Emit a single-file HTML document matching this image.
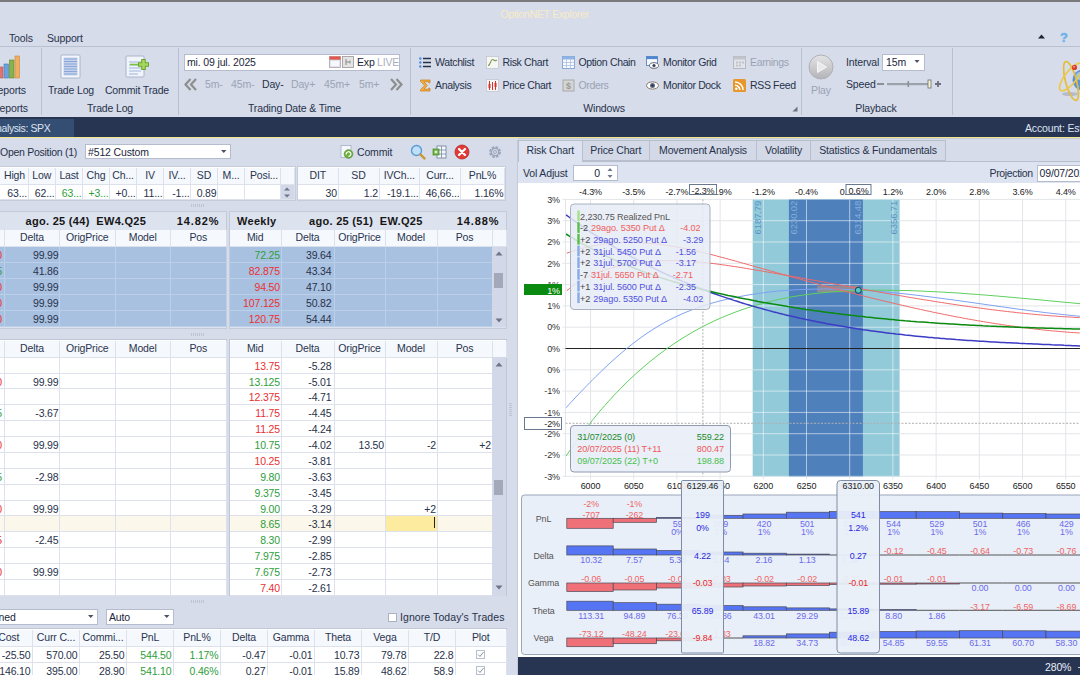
<!DOCTYPE html>
<html><head><meta charset="utf-8"><title>OptionNET Explorer</title>
<style>
html,body{margin:0;padding:0}
body{width:1080px;height:675px;overflow:hidden;position:relative;background:#d6dcea;font-family:"Liberation Sans",sans-serif;font-size:10.5px;color:#27324a;letter-spacing:-0.15px}
.a{position:absolute;white-space:nowrap}
.t{position:absolute;white-space:nowrap;line-height:12px;height:12px}
.c{text-align:center}
.r{text-align:right}
.g{color:#9aa3b4}
.vsep{position:absolute;width:1px;background:#b9c0cf}
.cell{position:absolute;box-sizing:border-box;border-right:1px solid #dce1eb;border-bottom:1px solid #dce1eb;white-space:nowrap;overflow:hidden;line-height:15px;padding:0 3px}
.hd{background:#f5f8fc;color:#2a3550;text-align:center}
.wt{background:#fff}
.grn{color:#2e9e3a}
.red{color:#ea3030}
.inp{position:absolute;background:#fff;border:1px solid #b4bccd;box-sizing:border-box}
svg{position:absolute;overflow:visible}
</style></head><body>

<div class="a" style="left:0;top:0;width:1080px;height:116px;background:#d6dcea"></div>
<div class="a" style="left:0;top:0;width:1080px;height:2px;background:#7a7a7c"></div>
<div class="t" style="left:500.5px;top:8px;color:#f8ebc6;font-size:10.5px;letter-spacing:-0.3px">OptionNET Explorer</div>
<div class="t" style="left:9px;top:32px">Tools</div>
<div class="t" style="left:47px;top:32px">Support</div>
<div class="a" style="left:0;top:46px;width:1080px;height:1px;background:#b9c0cf"></div>
<div class="vsep" style="left:41px;top:48px;height:67px"></div>
<div class="vsep" style="left:178px;top:48px;height:67px"></div>
<div class="vsep" style="left:410px;top:48px;height:67px"></div>
<div class="vsep" style="left:801px;top:48px;height:67px"></div>
<div class="vsep" style="left:952px;top:48px;height:67px"></div>
<div class="t c " style="left:-90px;width:200px;top:102px;">Reports</div>
<div class="t c " style="left:10px;width:200px;top:102px;">Trade Log</div>
<div class="t c " style="left:194.5px;width:200px;top:102px;">Trading Date &amp; Time</div>
<div class="t c " style="left:504px;width:200px;top:102px;">Windows</div>
<div class="t c " style="left:776px;width:200px;top:102px;">Playback</div>
<div class="t c " style="left:-92px;width:200px;top:84px;">Reports</div>
<div class="t c " style="left:-29px;width:200px;top:84px;">Trade Log</div>
<div class="t c " style="left:37px;width:200px;top:84px;">Commit Trade</div>
<div class="t c g" style="left:721px;width:200px;top:84px;">Play</div>
<svg style="left:0;top:54px" width="22" height="26" viewBox="0 0 22 26">
<rect x="-2" y="13" width="5" height="11" fill="#e07470" stroke="#b85450" stroke-width=".6"/>
<rect x="4" y="10" width="4.5" height="14" fill="#6aa2dc" stroke="#4a7eb4" stroke-width=".6"/>
<rect x="9.5" y="6" width="4.5" height="18" fill="#88b24a" stroke="#62882f" stroke-width=".6"/>
<rect x="15" y="2" width="4.5" height="22" fill="#f0ae62" stroke="#c48a3e" stroke-width=".6"/>
</svg>
<svg style="left:60px;top:54px" width="22" height="26" viewBox="0 0 22 26">
<rect x="1" y="1" width="19" height="23" rx="1" fill="#f4f7fc" stroke="#a9b6cc"/>
<rect x="3.500" y="3.500" width="14" height="18" fill="#c4d2ec"/><g stroke="#8aa6d8" stroke-width="1.100"><path d="M4 5h13M4 7.500h13M4 10h13M4 12.500h13M4 15h13M4 17.500h13M4 20h13"/></g>
</svg>
<svg style="left:125px;top:54px" width="28" height="26" viewBox="0 0 28 26">
<rect x="1" y="2" width="18" height="21" rx="1" fill="#f1f5fb" stroke="#a9b6cc"/>
<g stroke="#9db6dc" stroke-width="1.2"><path d="M4 8h12M4 11h12M4 14h12M4 17h12M4 20h9"/></g>
<path d="M5 10.5h9" stroke="#7fc241" stroke-width="1.6"/>
<path d="M18.5 5v11M13 10.5h11" stroke="#6aa52e" stroke-width="4.6"/>
<path d="M18.5 6v9M14 10.5h9" stroke="#a6d65a" stroke-width="2.6"/>
</svg>
<div class="inp" style="left:184px;top:54px;width:216px;height:17px"></div>
<div class="t" style="left:187px;top:56px;color:#1c263c">mi. 09 jul. 2025</div>
<svg style="left:329px;top:56px" width="12" height="12" viewBox="0 0 12 12"><rect x=".5" y=".5" width="11" height="11" fill="#dbe4f5" stroke="#b9a0a0" stroke-width=".8"/><rect x=".5" y=".5" width="11" height="3.2" fill="#e0584c"/><rect x="2" y="5" width="8" height="5" fill="#f6f8fc"/></svg>
<svg style="left:342px;top:56px" width="12" height="12" viewBox="0 0 12 12"><rect x=".5" y=".5" width="11" height="11" fill="#e4e4e4" stroke="#a0a0a0" stroke-width=".9"/><path d="M4 3v6M4 6h4M8 4.5v3" stroke="#8a8a8a" stroke-width="1" fill="none"/></svg>
<div class="t" style="left:357px;top:56px;color:#1c263c">Exp</div>
<div class="t g" style="left:377px;top:56px;color:#a9b0bd">LIVE</div>
<div class="t g" style="left:205px;top:78px">5m-</div>
<div class="t g" style="left:231px;top:78px">45m-</div>
<div class="t " style="left:262px;top:78px">Day-</div>
<div class="t g" style="left:291px;top:78px">Day+</div>
<div class="t g" style="left:324px;top:78px">45m+</div>
<div class="t g" style="left:359px;top:78px">5m+</div>
<svg style="left:184px;top:78px" width="14" height="13" viewBox="0 0 14 13"><path d="M6.5 1L1.5 6.5l5 5.5M12 1L7 6.5l5 5.5" fill="none" stroke="#8e8e8e" stroke-width="2.2"/></svg>
<svg style="left:389px;top:78px" width="14" height="13" viewBox="0 0 14 13"><path d="M2 1l5 5.5-5 5.5M7.500 1l5 5.500-5 5.500" fill="none" stroke="#8e8e8e" stroke-width="2.2"/></svg>
<svg style="left:419px;top:56.0px" width="13" height="13" viewBox="0 0 13 13"><g stroke="#27324a" stroke-width="1.4"><path d="M4 2.500h8M4 6.500h8M4 10.500h8"/></g><g fill="#4a90e0"><circle cx="1.300" cy="2.500" r="1.200"/><circle cx="1.300" cy="6.500" r="1.200"/><circle cx="1.300" cy="10.500" r="1.200"/></g></svg>
<div class="t " style="left:435px;top:56.0px;letter-spacing:-0.35px">Watchlist</div>
<svg style="left:419px;top:78.5px" width="13" height="13" viewBox="0 0 13 13"><path d="M1.500 1h9.500v2.800h-1.300V2.800H4.800L8.300 6.500 4.800 10.200h4.900V9.200H11V12H1.500v-1.200L5.600 6.500 1.500 2.200z" fill="#f4b03a" stroke="#c9791a" stroke-width=".7"/></svg>
<div class="t " style="left:435px;top:78.5px;letter-spacing:-0.35px">Analysis</div>
<svg style="left:486px;top:56.0px" width="13" height="13" viewBox="0 0 13 13"><rect x=".5" y=".5" width="12" height="12" fill="#f6f6f2" stroke="#c2c6cf" stroke-width=".8"/><path d="M2 9.500C4.500 9.500 4.500 3.500 6.500 3.500S8.500 6 11 4" fill="none" stroke="#7c9a52" stroke-width="1.100"/></svg>
<div class="t " style="left:502.5px;top:56.0px;letter-spacing:-0.35px">Risk Chart</div>
<svg style="left:486px;top:78.5px" width="13" height="13" viewBox="0 0 13 13"><rect x=".5" y=".5" width="12" height="12" fill="#f6f6f6" stroke="#c2c6cf" stroke-width=".8"/><g stroke="#d8332a" stroke-width="1"><path d="M3.500 2v9M6.500 3v8M9.500 2v9"/></g><rect x="2.500" y="5" width="2" height="4" fill="#d8332a"/><rect x="8.500" y="4" width="2" height="4" fill="#d8332a"/></svg>
<div class="t " style="left:502.5px;top:78.5px;letter-spacing:-0.35px">Price Chart</div>
<svg style="left:562px;top:56.0px" width="13" height="13" viewBox="0 0 13 13"><rect x=".5" y=".5" width="12" height="12" fill="#f8fafd" stroke="#7da3d4" stroke-width=".9"/><rect x=".5" y=".5" width="12" height="3" fill="#8db4e4"/><path d="M.5 6.500h12M.5 9.500h12M4.500 3.500v9M8.500 3.500v9" stroke="#a8c2e6" stroke-width=".8"/></svg>
<div class="t " style="left:578.5px;top:56.0px;letter-spacing:-0.35px">Option Chain</div>
<svg style="left:562px;top:78.5px" width="13" height="13" viewBox="0 0 13 13"><rect x="1" y="1" width="11" height="11" fill="#d5d5d5" stroke="#a8a8a8"/><text x="6.500" y="10" font-size="9" text-anchor="middle" fill="#9a9a9a" font-family="Liberation Sans" font-weight="bold">$</text></svg>
<div class="t g" style="left:578.5px;top:78.5px;letter-spacing:-0.35px">Orders</div>
<svg style="left:646px;top:56.0px" width="13" height="13" viewBox="0 0 13 13"><rect x=".5" y=".5" width="11" height="9" fill="#f4f8fd" stroke="#5b86c2" stroke-width=".9"/><rect x=".5" y=".5" width="11" height="2.600" fill="#4f86cf"/><ellipse cx="8" cy="9.500" rx="4.500" ry="2.800" fill="#fff" stroke="#5a5a66" stroke-width=".9"/><circle cx="8" cy="9.500" r="1.600" fill="#38445e"/></svg>
<div class="t " style="left:663px;top:56.0px;letter-spacing:-0.35px">Monitor Grid</div>
<svg style="left:646px;top:78.5px" width="13" height="13" viewBox="0 0 13 13"><ellipse cx="6.500" cy="6.500" rx="6" ry="3.600" fill="#fff" stroke="#8a7a70" stroke-width="1"/><circle cx="6.500" cy="6.500" r="2.500" fill="#5b6b86"/><circle cx="6.500" cy="6.500" r="1.100" fill="#1c2434"/></svg>
<div class="t " style="left:663px;top:78.5px;letter-spacing:-0.35px">Monitor Dock</div>
<svg style="left:733px;top:56.0px" width="13" height="13" viewBox="0 0 13 13"><rect x=".5" y=".5" width="12" height="12" fill="#e2e4e8" stroke="#b2b6bf" stroke-width=".9"/><rect x=".5" y=".5" width="12" height="3" fill="#c2c5cc"/><g fill="#bfc3cb"><rect x="3" y="5.500" width="2" height="2"/><rect x="6" y="5.500" width="2" height="2"/><rect x="9" y="5.500" width="2" height="2"/><rect x="3" y="8.500" width="2" height="2"/><rect x="6" y="8.500" width="2" height="2"/></g></svg>
<div class="t g" style="left:750px;top:56.0px;letter-spacing:-0.35px">Earnings</div>
<svg style="left:733px;top:78.5px" width="13" height="13" viewBox="0 0 13 13"><rect x="0" y="0" width="13" height="13" rx="1.500" fill="#e8972a"/><circle cx="3.300" cy="9.800" r="1.300" fill="#fff"/><path d="M2 6.200a4.800 4.800 0 0 1 4.800 4.800M2 3a8 8 0 0 1 8 8" fill="none" stroke="#fff" stroke-width="1.500"/></svg>
<div class="t " style="left:750px;top:78.5px;letter-spacing:-0.35px">RSS Feed</div>
<svg style="left:792px;top:106px" width="6" height="6" viewBox="0 0 6 6"><path d="M5.500 0.500v5h-5z" fill="#6a7388"/></svg>
<svg style="left:808px;top:54px" width="26" height="26" viewBox="0 0 26 26"><defs><linearGradient id="pg" x1="0" y1="0" x2="0" y2="1"><stop offset="0" stop-color="#e4e4e6"/><stop offset="1" stop-color="#b4b4b8"/></linearGradient></defs><circle cx="13" cy="13" r="12" fill="url(#pg)" stroke="#b0b0b6"/><path d="M9.500 7.500v11l9-5.500z" fill="#e9e9ec" stroke="#f6f6f8" stroke-width="1"/></svg>
<div class="t" style="left:846px;top:56px">Interval</div>
<div class="inp" style="left:882px;top:54px;width:43px;height:17px"></div>
<div class="t" style="left:886px;top:56px;color:#1c263c">15m</div>
<svg style="left:914px;top:60px" width="6" height="4" viewBox="0 0 6 4"><path d="M.5 0h5l-2.500 3z" fill="#4a5468"/></svg>
<div class="t" style="left:846px;top:78px">Speed</div>
<svg style="left:876px;top:78px" width="68" height="12" viewBox="0 0 68 12"><rect x="1" y="5" width="7" height="2" fill="#8a8f98"/><rect x="11" y="5" width="43" height="2.200" fill="#9da2aa"/><rect x="31.500" y="3" width="1.600" height="6" fill="#8a8f98"/><rect x="52" y="2" width="3" height="8" fill="#f8f3c8" stroke="#6a6f78" stroke-width=".8"/><path d="M62 3v6M59 6h6" stroke="#6a7080" stroke-width="1.800"/></svg>
<svg style="left:1038px;top:34px" width="8" height="5" viewBox="0 0 8 5"><path d="M0 4.500h7L3.500 0.500z" fill="#1c2434"/></svg>
<div class="a" style="left:1060px;top:29.500px;font-size:13px;font-weight:bold;color:#6aaee8;line-height:16px;text-shadow:0 0 1.500px #8cc0f0">?</div>
<svg style="left:0;top:0" width="1080" height="116" viewBox="0 0 1080 116">
<ellipse cx="1070" cy="94" rx="8" ry="2" fill="#b4bccb"/>
<circle cx="1083" cy="80" r="10.5" fill="#5b93d8"/><circle cx="1080" cy="76" r="4" fill="#9cc4ee"/>
<ellipse cx="1071" cy="81" rx="20" ry="5.500" fill="none" stroke="#e6bc3a" stroke-width="1.700" transform="rotate(75 1071 81)"/>
<ellipse cx="1071" cy="77" rx="17" ry="6" fill="none" stroke="#ecc84c" stroke-width="1.700" transform="rotate(-52 1071 77)"/>
<circle cx="1074.500" cy="67.400" r="2.600" fill="#d8402a"/><circle cx="1074" cy="66.800" r="1" fill="#f09080"/>
</svg>
<div class="a" style="left:0;top:116.500px;width:1080px;height:20px;background:#283552"></div>
<div class="a" style="left:0;top:119px;width:74px;height:17.500px;background:#344d73"></div>
<div class="t" style="left:-10.500px;top:122px;color:#dde4f2;letter-spacing:-0.4px">Analysis: SPX</div>
<div class="t" style="left:1025px;top:121.500px;color:#dde4f2">Account: Est</div>
<div class="a" style="left:0;top:136.500px;width:1080px;height:1.600px;background:#f3e68a"></div>
<div class="a" style="left:0;top:138.100px;width:1080px;height:.6px;background:#c4cbd6"></div>
<div class="a" style="left:0;top:138px;width:518px;height:537px;background:#d6dcea"></div>
<div class="a" style="left:517px;top:140px;width:1px;height:535px;background:#c3cad9"></div>
<div class="t" style="left:0px;top:145.5px;letter-spacing:-0.28px">Open Position (1)</div>
<div class="inp" style="left:85px;top:144px;width:146px;height:15px"></div>
<div class="t" style="left:88px;top:146px;color:#1c263c">#512 Custom</div>
<svg style="left:221px;top:150px" width="6" height="4" viewBox="0 0 6 4"><path d="M0 0h5.500l-2.750 3z" fill="#4a5468"/></svg>
<svg style="left:340px;top:145px" width="14" height="14" viewBox="0 0 14 14"><rect x="1" y=".5" width="10" height="12" fill="#f4f7fc" stroke="#a9b6cc" stroke-width=".9"/><circle cx="8.500" cy="9" r="4.300" fill="#6db33f" stroke="#4a8a28" stroke-width=".7"/><path d="M6.300 9.500a2.300 2.300 0 1 1 2.200 1.800" fill="none" stroke="#fff" stroke-width="1.200"/></svg>
<div class="t" style="left:357px;top:146px">Commit</div>
<svg style="left:410px;top:144px" width="16" height="16" viewBox="0 0 16 16"><circle cx="6.500" cy="6.500" r="5" fill="#bfe0f8" stroke="#5a9ad6" stroke-width="1.400"/><path d="M10.500 10.500l4 4" stroke="#c8962a" stroke-width="2.400" stroke-linecap="round"/></svg>
<svg style="left:432px;top:145px" width="15" height="14" viewBox="0 0 15 14"><rect x="5" y="1" width="9" height="12" fill="#f4f7fc" stroke="#7a8aa4" stroke-width=".9"/><path d="M9.500 1v12M5 5h9M5 9h9" stroke="#7a8aa4" stroke-width=".8"/><rect x="1" y="4" width="6" height="6" fill="#6db33f" stroke="#4a8a28" stroke-width=".7"/><path d="M2.500 7h3M4 5.500v3" stroke="#fff" stroke-width="1"/></svg>
<svg style="left:454px;top:144px" width="16" height="16" viewBox="0 0 16 16"><circle cx="8" cy="8" r="7" fill="#e23a36" stroke="#b82420" stroke-width=".8"/><path d="M5 5l6 6M11 5l-6 6" stroke="#fff" stroke-width="2.200" stroke-linecap="round"/></svg>
<svg style="left:488px;top:145px" width="14" height="14" viewBox="0 0 14 14"><circle cx="7" cy="7" r="4.600" fill="none" stroke="#9aa5ba" stroke-width="2.600" stroke-dasharray="2.400 1.200"/><circle cx="7" cy="7" r="3.600" fill="#d6dcea" stroke="#9aa5ba" stroke-width="1.200"/><circle cx="7" cy="7" r="1.500" fill="#d6dcea" stroke="#9aa5ba" stroke-width=".9"/></svg>
<div class="a" style="left:-1px;top:166px;width:296.5px;height:35px;background:#fff;border:1px solid #c5ccda;box-sizing:border-box"></div>
<div class="cell hd" style="left:-2.5px;top:167.7px;width:4.0px;height:17.0px;line-height:14.6px;"></div>
<div class="cell wt" style="left:-2.5px;top:184.7px;width:4.0px;height:15.5px;line-height:17.1px;"></div>
<div class="cell hd" style="left:1.5px;top:167.7px;width:27.0px;height:17.0px;line-height:14.6px;padding:0 1px;">High</div>
<div class="cell wt r " style="left:1.5px;top:184.7px;width:27.0px;height:15.5px;line-height:17.1px;padding:0 .5px 0 0">63...</div>
<div class="cell hd" style="left:28.5px;top:167.7px;width:27.5px;height:17.0px;line-height:14.6px;padding:0 1px;">Low</div>
<div class="cell wt r " style="left:28.5px;top:184.7px;width:27.5px;height:15.5px;line-height:17.1px;padding:0 .5px 0 0">62...</div>
<div class="cell hd" style="left:56.0px;top:167.7px;width:27.0px;height:17.0px;line-height:14.6px;padding:0 1px;">Last</div>
<div class="cell wt r grn" style="left:56.0px;top:184.7px;width:27.0px;height:15.5px;line-height:17.1px;padding:0 .5px 0 0">63...</div>
<div class="cell hd" style="left:83.0px;top:167.7px;width:27.0px;height:17.0px;line-height:14.6px;padding:0 1px;">Chg</div>
<div class="cell wt r grn" style="left:83.0px;top:184.7px;width:27.0px;height:15.5px;line-height:17.1px;padding:0 .5px 0 0">+3...</div>
<div class="cell hd" style="left:110.0px;top:167.7px;width:27.0px;height:17.0px;line-height:14.6px;padding:0 1px;">Ch...</div>
<div class="cell wt r " style="left:110.0px;top:184.7px;width:27.0px;height:15.5px;line-height:17.1px;padding:0 .5px 0 0">+0...</div>
<div class="cell hd" style="left:137.0px;top:167.7px;width:27.0px;height:17.0px;line-height:14.6px;padding:0 1px;">IV</div>
<div class="cell wt r " style="left:137.0px;top:184.7px;width:27.0px;height:15.5px;line-height:17.1px;padding:0 .5px 0 0">11...</div>
<div class="cell hd" style="left:164.0px;top:167.7px;width:27.0px;height:17.0px;line-height:14.6px;padding:0 1px;">IV...</div>
<div class="cell wt r " style="left:164.0px;top:184.7px;width:27.0px;height:15.5px;line-height:17.1px;padding:0 .5px 0 0">-1...</div>
<div class="cell hd" style="left:191.0px;top:167.7px;width:27.0px;height:17.0px;line-height:14.6px;padding:0 1px;">SD</div>
<div class="cell wt r " style="left:191.0px;top:184.7px;width:27.0px;height:15.5px;line-height:17.1px;padding:0 .5px 0 0">0.89</div>
<div class="cell hd" style="left:218.0px;top:167.7px;width:27.0px;height:17.0px;line-height:14.6px;padding:0 1px;">M...</div>
<div class="cell wt r " style="left:218.0px;top:184.7px;width:27.0px;height:15.5px;line-height:17.1px;padding:0 .5px 0 0"></div>
<div class="cell hd" style="left:245.0px;top:167.7px;width:35.5px;height:17.0px;line-height:14.6px;padding:0 1px;text-align:left;padding-left:5px;">Posi...</div>
<div class="cell wt r " style="left:245.0px;top:184.7px;width:35.5px;height:15.5px;line-height:17.1px;padding:0 .5px 0 0"></div>
<div class="cell hd" style="left:280.5px;top:167.7px;width:14.5px;height:17.0px;line-height:14.6px;padding:0 1px;"></div>
<div class="cell wt r " style="left:280.5px;top:184.7px;width:14.5px;height:15.5px;line-height:17.1px;padding:0 .5px 0 0;background:#d2d8e7"></div>
<svg style="left:283px;top:186px" width="8" height="13" viewBox="0 0 8 13"><path d="M1 4.500h6L4 1.500zM1 8.500h6L4 11.500z" fill="#6c758a"/></svg>
<div class="a" style="left:296.500px;top:166px;width:209px;height:35px;background:#fff;border:1px solid #c5ccda;box-sizing:border-box"></div>
<div class="cell hd" style="left:298.0px;top:167.7px;width:40.5px;height:17.0px;line-height:14.6px;padding:0 1px">DIT</div>
<div class="cell wt r" style="left:298.0px;top:184.7px;width:40.5px;height:15.5px;line-height:17.1px;padding:0 .5px 0 0">30</div>
<div class="cell hd" style="left:338.5px;top:167.7px;width:41.0px;height:17.0px;line-height:14.6px;padding:0 1px">SD</div>
<div class="cell wt r" style="left:338.5px;top:184.7px;width:41.0px;height:15.5px;line-height:17.1px;padding:0 .5px 0 0">1.2</div>
<div class="cell hd" style="left:379.5px;top:167.7px;width:40.5px;height:17.0px;line-height:14.6px;padding:0 1px">IVCh...</div>
<div class="cell wt r" style="left:379.5px;top:184.7px;width:40.5px;height:15.5px;line-height:17.1px;padding:0 .5px 0 0">-19.1...</div>
<div class="cell hd" style="left:420.0px;top:167.7px;width:41.0px;height:17.0px;line-height:14.6px;padding:0 1px">Curr...</div>
<div class="cell wt r" style="left:420.0px;top:184.7px;width:41.0px;height:15.5px;line-height:17.1px;padding:0 .5px 0 0">46,66...</div>
<div class="cell hd" style="left:461.0px;top:167.7px;width:44.0px;height:17.0px;line-height:14.6px;padding:0 1px">PnL%</div>
<div class="cell wt r" style="left:461.0px;top:184.7px;width:44.0px;height:15.5px;line-height:17.1px;padding:0 .5px 0 0">1.16%</div>
<div class="a" style="left:191px;top:203.5px;width:14px;height:3px;background:repeating-linear-gradient(90deg,#bcc3d2 0 1px,transparent 1px 2px)"></div>
<div class="a" style="left:191px;top:332.5px;width:14px;height:3px;background:repeating-linear-gradient(90deg,#bcc3d2 0 1px,transparent 1px 2px)"></div>
<div class="a" style="left:191px;top:599.5px;width:14px;height:3px;background:repeating-linear-gradient(90deg,#bcc3d2 0 1px,transparent 1px 2px)"></div>
<div class="a" style="left:509.0px;top:403px;width:3px;height:14px;background:repeating-linear-gradient(#bcc3d2 0 1px,transparent 1px 2px)"></div>
<div class="a" style="left:-2px;top:210.500px;width:228.500px;height:118px;background:#dce2ee;border:1px solid #c3cad8;box-sizing:border-box"></div>
<div class="a" style="left:229px;top:210.500px;width:277.500px;height:118px;background:#dce2ee;border:1px solid #c3cad8;box-sizing:border-box"></div>
<div class="t" style="left:25.5px;top:214.500px;font-weight:bold;font-size:11px;color:#161616;letter-spacing:0.3px">ago. 25 (44)&nbsp; EW4.Q25</div>
<div class="t r" style="left:150px;width:69.5px;top:214.500px;font-weight:bold;font-size:11px;color:#161616;letter-spacing:0.3px;letter-spacing:0.9px">14.82%</div>
<div class="t" style="left:237px;top:214.500px;font-weight:bold;font-size:11px;color:#161616;letter-spacing:0.3px">Weekly</div>
<div class="t" style="left:309px;top:214.500px;font-weight:bold;font-size:11px;color:#161616;letter-spacing:0.3px">ago. 25 (51)&nbsp; EW.Q25</div>
<div class="t r" style="left:430px;width:69.5px;top:214.500px;font-weight:bold;font-size:11px;color:#161616;letter-spacing:0.3px;letter-spacing:0.9px">14.88%</div>
<div class="cell hd" style="left:-50.5px;top:230.2px;width:55.5px;height:17.0px;line-height:14.6px;padding:0"></div>
<div class="cell hd" style="left:5.0px;top:230.2px;width:55.0px;height:17.0px;line-height:14.6px;padding:0">Delta</div>
<div class="cell hd" style="left:60.0px;top:230.2px;width:55.5px;height:17.0px;line-height:14.6px;padding:0">OrigPrice</div>
<div class="cell hd" style="left:115.5px;top:230.2px;width:55.5px;height:17.0px;line-height:14.6px;padding:0">Model</div>
<div class="cell hd" style="left:171.0px;top:230.2px;width:55.5px;height:17.0px;line-height:14.6px;padding:0">Pos</div>
<div class="cell hd" style="left:230.0px;top:230.2px;width:51.5px;height:17.0px;line-height:14.6px;padding:0">Mid</div>
<div class="cell hd" style="left:281.5px;top:230.2px;width:53.0px;height:17.0px;line-height:14.6px;padding:0">Delta</div>
<div class="cell hd" style="left:334.5px;top:230.2px;width:51.0px;height:17.0px;line-height:14.6px;padding:0">OrigPrice</div>
<div class="cell hd" style="left:385.5px;top:230.2px;width:52.0px;height:17.0px;line-height:14.6px;padding:0">Model</div>
<div class="cell hd" style="left:437.5px;top:230.2px;width:55.0px;height:17.0px;line-height:14.6px;padding:0">Pos</div>
<div class="cell hd" style="left:492.5px;top:230.2px;width:14.0px;height:17.0px;line-height:14.6px;padding:0"></div>
<div class="cell r red" style="left:-50.5px;top:247.2px;width:55.5px;height:16.0px;line-height:17.6px;background:#a9c1e1;border-color:#bccfe8;padding:0 2px 0 0">0</div>
<div class="cell r" style="left:5.0px;top:247.2px;width:55.0px;height:16.0px;line-height:17.6px;background:#a9c1e1;border-color:#bccfe8;padding:0 .5px 0 0">99.99</div>
<div class="cell " style="left:60.0px;top:247.2px;width:55.5px;height:16.0px;line-height:17.6px;background:#a9c1e1;border-color:#bccfe8;"></div>
<div class="cell " style="left:115.5px;top:247.2px;width:55.5px;height:16.0px;line-height:17.6px;background:#a9c1e1;border-color:#bccfe8;"></div>
<div class="cell " style="left:171.0px;top:247.2px;width:55.5px;height:16.0px;line-height:17.6px;background:#a9c1e1;border-color:#bccfe8;"></div>
<div class="cell r grn" style="left:230.0px;top:247.2px;width:51.5px;height:16.0px;line-height:17.6px;background:#a9c1e1;border-color:#bccfe8;padding:0 .5px 0 0">72.25</div>
<div class="cell r" style="left:281.5px;top:247.2px;width:53.0px;height:16.0px;line-height:17.6px;background:#a9c1e1;border-color:#bccfe8;padding:0 2px 0 0">39.64</div>
<div class="cell " style="left:334.5px;top:247.2px;width:51.0px;height:16.0px;line-height:17.6px;background:#a9c1e1;border-color:#bccfe8;"></div>
<div class="cell " style="left:385.5px;top:247.2px;width:52.0px;height:16.0px;line-height:17.6px;background:#a9c1e1;border-color:#bccfe8;"></div>
<div class="cell " style="left:437.5px;top:247.2px;width:55.0px;height:16.0px;line-height:17.6px;background:#a9c1e1;border-color:#bccfe8;"></div>
<div class="cell r grn" style="left:-50.5px;top:263.2px;width:55.5px;height:16.0px;line-height:17.6px;background:#a9c1e1;border-color:#bccfe8;padding:0 2px 0 0">5</div>
<div class="cell r" style="left:5.0px;top:263.2px;width:55.0px;height:16.0px;line-height:17.6px;background:#a9c1e1;border-color:#bccfe8;padding:0 .5px 0 0">41.86</div>
<div class="cell " style="left:60.0px;top:263.2px;width:55.5px;height:16.0px;line-height:17.6px;background:#a9c1e1;border-color:#bccfe8;"></div>
<div class="cell " style="left:115.5px;top:263.2px;width:55.5px;height:16.0px;line-height:17.6px;background:#a9c1e1;border-color:#bccfe8;"></div>
<div class="cell " style="left:171.0px;top:263.2px;width:55.5px;height:16.0px;line-height:17.6px;background:#a9c1e1;border-color:#bccfe8;"></div>
<div class="cell r red" style="left:230.0px;top:263.2px;width:51.5px;height:16.0px;line-height:17.6px;background:#a9c1e1;border-color:#bccfe8;padding:0 .5px 0 0">82.875</div>
<div class="cell r" style="left:281.5px;top:263.2px;width:53.0px;height:16.0px;line-height:17.6px;background:#a9c1e1;border-color:#bccfe8;padding:0 2px 0 0">43.34</div>
<div class="cell " style="left:334.5px;top:263.2px;width:51.0px;height:16.0px;line-height:17.6px;background:#a9c1e1;border-color:#bccfe8;"></div>
<div class="cell " style="left:385.5px;top:263.2px;width:52.0px;height:16.0px;line-height:17.6px;background:#a9c1e1;border-color:#bccfe8;"></div>
<div class="cell " style="left:437.5px;top:263.2px;width:55.0px;height:16.0px;line-height:17.6px;background:#a9c1e1;border-color:#bccfe8;"></div>
<div class="cell r red" style="left:-50.5px;top:279.2px;width:55.5px;height:16.0px;line-height:17.6px;background:#a9c1e1;border-color:#bccfe8;padding:0 2px 0 0">0</div>
<div class="cell r" style="left:5.0px;top:279.2px;width:55.0px;height:16.0px;line-height:17.6px;background:#a9c1e1;border-color:#bccfe8;padding:0 .5px 0 0">99.99</div>
<div class="cell " style="left:60.0px;top:279.2px;width:55.5px;height:16.0px;line-height:17.6px;background:#a9c1e1;border-color:#bccfe8;"></div>
<div class="cell " style="left:115.5px;top:279.2px;width:55.5px;height:16.0px;line-height:17.6px;background:#a9c1e1;border-color:#bccfe8;"></div>
<div class="cell " style="left:171.0px;top:279.2px;width:55.5px;height:16.0px;line-height:17.6px;background:#a9c1e1;border-color:#bccfe8;"></div>
<div class="cell r red" style="left:230.0px;top:279.2px;width:51.5px;height:16.0px;line-height:17.6px;background:#a9c1e1;border-color:#bccfe8;padding:0 .5px 0 0">94.50</div>
<div class="cell r" style="left:281.5px;top:279.2px;width:53.0px;height:16.0px;line-height:17.6px;background:#a9c1e1;border-color:#bccfe8;padding:0 2px 0 0">47.10</div>
<div class="cell " style="left:334.5px;top:279.2px;width:51.0px;height:16.0px;line-height:17.6px;background:#a9c1e1;border-color:#bccfe8;"></div>
<div class="cell " style="left:385.5px;top:279.2px;width:52.0px;height:16.0px;line-height:17.6px;background:#a9c1e1;border-color:#bccfe8;"></div>
<div class="cell " style="left:437.5px;top:279.2px;width:55.0px;height:16.0px;line-height:17.6px;background:#a9c1e1;border-color:#bccfe8;"></div>
<div class="cell r red" style="left:-50.5px;top:295.2px;width:55.5px;height:16.0px;line-height:17.6px;background:#a9c1e1;border-color:#bccfe8;padding:0 2px 0 0">0</div>
<div class="cell r" style="left:5.0px;top:295.2px;width:55.0px;height:16.0px;line-height:17.6px;background:#a9c1e1;border-color:#bccfe8;padding:0 .5px 0 0">99.99</div>
<div class="cell " style="left:60.0px;top:295.2px;width:55.5px;height:16.0px;line-height:17.6px;background:#a9c1e1;border-color:#bccfe8;"></div>
<div class="cell " style="left:115.5px;top:295.2px;width:55.5px;height:16.0px;line-height:17.6px;background:#a9c1e1;border-color:#bccfe8;"></div>
<div class="cell " style="left:171.0px;top:295.2px;width:55.5px;height:16.0px;line-height:17.6px;background:#a9c1e1;border-color:#bccfe8;"></div>
<div class="cell r red" style="left:230.0px;top:295.2px;width:51.5px;height:16.0px;line-height:17.6px;background:#a9c1e1;border-color:#bccfe8;padding:0 .5px 0 0">107.125</div>
<div class="cell r" style="left:281.5px;top:295.2px;width:53.0px;height:16.0px;line-height:17.6px;background:#a9c1e1;border-color:#bccfe8;padding:0 2px 0 0">50.82</div>
<div class="cell " style="left:334.5px;top:295.2px;width:51.0px;height:16.0px;line-height:17.6px;background:#a9c1e1;border-color:#bccfe8;"></div>
<div class="cell " style="left:385.5px;top:295.2px;width:52.0px;height:16.0px;line-height:17.6px;background:#a9c1e1;border-color:#bccfe8;"></div>
<div class="cell " style="left:437.5px;top:295.2px;width:55.0px;height:16.0px;line-height:17.6px;background:#a9c1e1;border-color:#bccfe8;"></div>
<div class="cell r red" style="left:-50.5px;top:311.2px;width:55.5px;height:16.0px;line-height:17.6px;background:#a9c1e1;border-color:#bccfe8;padding:0 2px 0 0">0</div>
<div class="cell r" style="left:5.0px;top:311.2px;width:55.0px;height:16.0px;line-height:17.6px;background:#a9c1e1;border-color:#bccfe8;padding:0 .5px 0 0">99.99</div>
<div class="cell " style="left:60.0px;top:311.2px;width:55.5px;height:16.0px;line-height:17.6px;background:#a9c1e1;border-color:#bccfe8;"></div>
<div class="cell " style="left:115.5px;top:311.2px;width:55.5px;height:16.0px;line-height:17.6px;background:#a9c1e1;border-color:#bccfe8;"></div>
<div class="cell " style="left:171.0px;top:311.2px;width:55.5px;height:16.0px;line-height:17.6px;background:#a9c1e1;border-color:#bccfe8;"></div>
<div class="cell r red" style="left:230.0px;top:311.2px;width:51.5px;height:16.0px;line-height:17.6px;background:#a9c1e1;border-color:#bccfe8;padding:0 .5px 0 0">120.75</div>
<div class="cell r" style="left:281.5px;top:311.2px;width:53.0px;height:16.0px;line-height:17.6px;background:#a9c1e1;border-color:#bccfe8;padding:0 2px 0 0">54.44</div>
<div class="cell " style="left:334.5px;top:311.2px;width:51.0px;height:16.0px;line-height:17.6px;background:#a9c1e1;border-color:#bccfe8;"></div>
<div class="cell " style="left:385.5px;top:311.2px;width:52.0px;height:16.0px;line-height:17.6px;background:#a9c1e1;border-color:#bccfe8;"></div>
<div class="cell " style="left:437.5px;top:311.2px;width:55.0px;height:16.0px;line-height:17.6px;background:#a9c1e1;border-color:#bccfe8;"></div>
<div class="a" style="left:492px;top:246.500px;width:14px;height:80px;background:#d2d8e7"></div>
<svg style="left:495px;top:251px" width="8" height="5" viewBox="0 0 8 5"><path d="M.5 4.500h7L4 .5z" fill="#6c758a"/></svg>
<svg style="left:495px;top:318px" width="8" height="5" viewBox="0 0 8 5"><path d="M.5 .5h7L4 4.500z" fill="#6c758a"/></svg>
<div class="a" style="left:494px;top:273px;width:9px;height:15px;background:#a3a9b8"></div>
<div class="a" style="left:-2px;top:338.500px;width:228.500px;height:257.500px;background:#fff;border:1px solid #c0c8d8;box-sizing:border-box"></div>
<div class="a" style="left:229px;top:338.500px;width:277.500px;height:257.500px;background:#fff;border:1px solid #c0c8d8;box-sizing:border-box"></div>
<div class="cell hd" style="left:-50.5px;top:341.0px;width:55.5px;height:16.7px;line-height:14.3px;padding:0"></div>
<div class="cell hd" style="left:5.0px;top:341.0px;width:55.0px;height:16.7px;line-height:14.3px;padding:0">Delta</div>
<div class="cell hd" style="left:60.0px;top:341.0px;width:55.5px;height:16.7px;line-height:14.3px;padding:0">OrigPrice</div>
<div class="cell hd" style="left:115.5px;top:341.0px;width:55.5px;height:16.7px;line-height:14.3px;padding:0">Model</div>
<div class="cell hd" style="left:171.0px;top:341.0px;width:55.5px;height:16.7px;line-height:14.3px;padding:0">Pos</div>
<div class="cell hd" style="left:230.0px;top:341.0px;width:51.5px;height:16.7px;line-height:14.3px;padding:0">Mid</div>
<div class="cell hd" style="left:281.5px;top:341.0px;width:53.0px;height:16.7px;line-height:14.3px;padding:0">Delta</div>
<div class="cell hd" style="left:334.5px;top:341.0px;width:51.0px;height:16.7px;line-height:14.3px;padding:0">OrigPrice</div>
<div class="cell hd" style="left:385.5px;top:341.0px;width:52.0px;height:16.7px;line-height:14.3px;padding:0">Model</div>
<div class="cell hd" style="left:437.5px;top:341.0px;width:55.0px;height:16.7px;line-height:14.3px;padding:0">Pos</div>
<div class="cell hd" style="left:492.5px;top:341.0px;width:14.0px;height:16.7px;line-height:14.3px;padding:0"></div>
<div class="cell r " style="left:-50.5px;top:358.0px;width:55.5px;height:16.0px;line-height:17.6px;background:#fff;padding:0 2px 0 0"></div>
<div class="cell r" style="left:5.0px;top:358.0px;width:55.0px;height:16.0px;line-height:17.6px;background:#fff;padding:0 .5px 0 0"></div>
<div class="cell " style="left:60.0px;top:358.0px;width:55.5px;height:16.0px;line-height:17.6px;background:#fff;"></div>
<div class="cell " style="left:115.5px;top:358.0px;width:55.5px;height:16.0px;line-height:17.6px;background:#fff;"></div>
<div class="cell " style="left:171.0px;top:358.0px;width:55.5px;height:16.0px;line-height:17.6px;background:#fff;"></div>
<div class="cell r red" style="left:230.0px;top:358.0px;width:51.5px;height:16.0px;line-height:17.6px;background:#fff;padding:0 .5px 0 0">13.75</div>
<div class="cell r" style="left:281.5px;top:358.0px;width:53.0px;height:16.0px;line-height:17.6px;background:#fff;padding:0 2px 0 0">-5.28</div>
<div class="cell r" style="left:334.5px;top:358.0px;width:51.0px;height:16.0px;line-height:17.6px;background:#fff;padding:0 .5px 0 0"></div>
<div class="cell r" style="left:385.5px;top:358.0px;width:52.0px;height:16.0px;line-height:17.6px;background:#fff;padding:0 .5px 0 0"></div>
<div class="cell r" style="left:437.5px;top:358.0px;width:55.0px;height:16.0px;line-height:17.6px;background:#fff;padding:0 .5px 0 0"></div>
<div class="cell r red" style="left:-50.5px;top:374.0px;width:55.5px;height:15.0px;line-height:16.6px;background:#fff;padding:0 2px 0 0">0</div>
<div class="cell r" style="left:5.0px;top:374.0px;width:55.0px;height:15.0px;line-height:16.6px;background:#fff;padding:0 .5px 0 0">99.99</div>
<div class="cell " style="left:60.0px;top:374.0px;width:55.5px;height:15.0px;line-height:16.6px;background:#fff;"></div>
<div class="cell " style="left:115.5px;top:374.0px;width:55.5px;height:15.0px;line-height:16.6px;background:#fff;"></div>
<div class="cell " style="left:171.0px;top:374.0px;width:55.5px;height:15.0px;line-height:16.6px;background:#fff;"></div>
<div class="cell r grn" style="left:230.0px;top:374.0px;width:51.5px;height:15.0px;line-height:16.6px;background:#fff;padding:0 .5px 0 0">13.125</div>
<div class="cell r" style="left:281.5px;top:374.0px;width:53.0px;height:15.0px;line-height:16.6px;background:#fff;padding:0 2px 0 0">-5.01</div>
<div class="cell r" style="left:334.5px;top:374.0px;width:51.0px;height:15.0px;line-height:16.6px;background:#fff;padding:0 .5px 0 0"></div>
<div class="cell r" style="left:385.5px;top:374.0px;width:52.0px;height:15.0px;line-height:16.6px;background:#fff;padding:0 .5px 0 0"></div>
<div class="cell r" style="left:437.5px;top:374.0px;width:55.0px;height:15.0px;line-height:16.6px;background:#fff;padding:0 .5px 0 0"></div>
<div class="cell r " style="left:-50.5px;top:389.0px;width:55.5px;height:16.0px;line-height:17.6px;background:#fff;padding:0 2px 0 0"></div>
<div class="cell r" style="left:5.0px;top:389.0px;width:55.0px;height:16.0px;line-height:17.6px;background:#fff;padding:0 .5px 0 0"></div>
<div class="cell " style="left:60.0px;top:389.0px;width:55.5px;height:16.0px;line-height:17.6px;background:#fff;"></div>
<div class="cell " style="left:115.5px;top:389.0px;width:55.5px;height:16.0px;line-height:17.6px;background:#fff;"></div>
<div class="cell " style="left:171.0px;top:389.0px;width:55.5px;height:16.0px;line-height:17.6px;background:#fff;"></div>
<div class="cell r red" style="left:230.0px;top:389.0px;width:51.5px;height:16.0px;line-height:17.6px;background:#fff;padding:0 .5px 0 0">12.375</div>
<div class="cell r" style="left:281.5px;top:389.0px;width:53.0px;height:16.0px;line-height:17.6px;background:#fff;padding:0 2px 0 0">-4.71</div>
<div class="cell r" style="left:334.5px;top:389.0px;width:51.0px;height:16.0px;line-height:17.6px;background:#fff;padding:0 .5px 0 0"></div>
<div class="cell r" style="left:385.5px;top:389.0px;width:52.0px;height:16.0px;line-height:17.6px;background:#fff;padding:0 .5px 0 0"></div>
<div class="cell r" style="left:437.5px;top:389.0px;width:55.0px;height:16.0px;line-height:17.6px;background:#fff;padding:0 .5px 0 0"></div>
<div class="cell r grn" style="left:-50.5px;top:405.0px;width:55.5px;height:16.0px;line-height:17.6px;background:#fff;padding:0 2px 0 0">5</div>
<div class="cell r" style="left:5.0px;top:405.0px;width:55.0px;height:16.0px;line-height:17.6px;background:#fff;padding:0 .5px 0 0">-3.67</div>
<div class="cell " style="left:60.0px;top:405.0px;width:55.5px;height:16.0px;line-height:17.6px;background:#fff;"></div>
<div class="cell " style="left:115.5px;top:405.0px;width:55.5px;height:16.0px;line-height:17.6px;background:#fff;"></div>
<div class="cell " style="left:171.0px;top:405.0px;width:55.5px;height:16.0px;line-height:17.6px;background:#fff;"></div>
<div class="cell r red" style="left:230.0px;top:405.0px;width:51.5px;height:16.0px;line-height:17.6px;background:#fff;padding:0 .5px 0 0">11.75</div>
<div class="cell r" style="left:281.5px;top:405.0px;width:53.0px;height:16.0px;line-height:17.6px;background:#fff;padding:0 2px 0 0">-4.45</div>
<div class="cell r" style="left:334.5px;top:405.0px;width:51.0px;height:16.0px;line-height:17.6px;background:#fff;padding:0 .5px 0 0"></div>
<div class="cell r" style="left:385.5px;top:405.0px;width:52.0px;height:16.0px;line-height:17.6px;background:#fff;padding:0 .5px 0 0"></div>
<div class="cell r" style="left:437.5px;top:405.0px;width:55.0px;height:16.0px;line-height:17.6px;background:#fff;padding:0 .5px 0 0"></div>
<div class="cell r " style="left:-50.5px;top:421.0px;width:55.5px;height:16.0px;line-height:17.6px;background:#fff;padding:0 2px 0 0"></div>
<div class="cell r" style="left:5.0px;top:421.0px;width:55.0px;height:16.0px;line-height:17.6px;background:#fff;padding:0 .5px 0 0"></div>
<div class="cell " style="left:60.0px;top:421.0px;width:55.5px;height:16.0px;line-height:17.6px;background:#fff;"></div>
<div class="cell " style="left:115.5px;top:421.0px;width:55.5px;height:16.0px;line-height:17.6px;background:#fff;"></div>
<div class="cell " style="left:171.0px;top:421.0px;width:55.5px;height:16.0px;line-height:17.6px;background:#fff;"></div>
<div class="cell r red" style="left:230.0px;top:421.0px;width:51.5px;height:16.0px;line-height:17.6px;background:#fff;padding:0 .5px 0 0">11.25</div>
<div class="cell r" style="left:281.5px;top:421.0px;width:53.0px;height:16.0px;line-height:17.6px;background:#fff;padding:0 2px 0 0">-4.24</div>
<div class="cell r" style="left:334.5px;top:421.0px;width:51.0px;height:16.0px;line-height:17.6px;background:#fff;padding:0 .5px 0 0"></div>
<div class="cell r" style="left:385.5px;top:421.0px;width:52.0px;height:16.0px;line-height:17.6px;background:#fff;padding:0 .5px 0 0"></div>
<div class="cell r" style="left:437.5px;top:421.0px;width:55.0px;height:16.0px;line-height:17.6px;background:#fff;padding:0 .5px 0 0"></div>
<div class="cell r red" style="left:-50.5px;top:437.0px;width:55.5px;height:16.0px;line-height:17.6px;background:#fff;padding:0 2px 0 0">0</div>
<div class="cell r" style="left:5.0px;top:437.0px;width:55.0px;height:16.0px;line-height:17.6px;background:#fff;padding:0 .5px 0 0">99.99</div>
<div class="cell " style="left:60.0px;top:437.0px;width:55.5px;height:16.0px;line-height:17.6px;background:#fff;"></div>
<div class="cell " style="left:115.5px;top:437.0px;width:55.5px;height:16.0px;line-height:17.6px;background:#fff;"></div>
<div class="cell " style="left:171.0px;top:437.0px;width:55.5px;height:16.0px;line-height:17.6px;background:#fff;"></div>
<div class="cell r grn" style="left:230.0px;top:437.0px;width:51.5px;height:16.0px;line-height:17.6px;background:#fff;padding:0 .5px 0 0">10.75</div>
<div class="cell r" style="left:281.5px;top:437.0px;width:53.0px;height:16.0px;line-height:17.6px;background:#fff;padding:0 2px 0 0">-4.02</div>
<div class="cell r" style="left:334.5px;top:437.0px;width:51.0px;height:16.0px;line-height:17.6px;background:#fff;padding:0 .5px 0 0">13.50</div>
<div class="cell r" style="left:385.5px;top:437.0px;width:52.0px;height:16.0px;line-height:17.6px;background:#fff;padding:0 .5px 0 0">-2</div>
<div class="cell r" style="left:437.5px;top:437.0px;width:55.0px;height:16.0px;line-height:17.6px;background:#fff;padding:0 .5px 0 0">+2</div>
<div class="cell r " style="left:-50.5px;top:453.0px;width:55.5px;height:16.0px;line-height:17.6px;background:#fff;padding:0 2px 0 0"></div>
<div class="cell r" style="left:5.0px;top:453.0px;width:55.0px;height:16.0px;line-height:17.6px;background:#fff;padding:0 .5px 0 0"></div>
<div class="cell " style="left:60.0px;top:453.0px;width:55.5px;height:16.0px;line-height:17.6px;background:#fff;"></div>
<div class="cell " style="left:115.5px;top:453.0px;width:55.5px;height:16.0px;line-height:17.6px;background:#fff;"></div>
<div class="cell " style="left:171.0px;top:453.0px;width:55.5px;height:16.0px;line-height:17.6px;background:#fff;"></div>
<div class="cell r red" style="left:230.0px;top:453.0px;width:51.5px;height:16.0px;line-height:17.6px;background:#fff;padding:0 .5px 0 0">10.25</div>
<div class="cell r" style="left:281.5px;top:453.0px;width:53.0px;height:16.0px;line-height:17.6px;background:#fff;padding:0 2px 0 0">-3.81</div>
<div class="cell r" style="left:334.5px;top:453.0px;width:51.0px;height:16.0px;line-height:17.6px;background:#fff;padding:0 .5px 0 0"></div>
<div class="cell r" style="left:385.5px;top:453.0px;width:52.0px;height:16.0px;line-height:17.6px;background:#fff;padding:0 .5px 0 0"></div>
<div class="cell r" style="left:437.5px;top:453.0px;width:55.0px;height:16.0px;line-height:17.6px;background:#fff;padding:0 .5px 0 0"></div>
<div class="cell r grn" style="left:-50.5px;top:469.0px;width:55.5px;height:16.0px;line-height:17.6px;background:#fff;padding:0 2px 0 0">5</div>
<div class="cell r" style="left:5.0px;top:469.0px;width:55.0px;height:16.0px;line-height:17.6px;background:#fff;padding:0 .5px 0 0">-2.98</div>
<div class="cell " style="left:60.0px;top:469.0px;width:55.5px;height:16.0px;line-height:17.6px;background:#fff;"></div>
<div class="cell " style="left:115.5px;top:469.0px;width:55.5px;height:16.0px;line-height:17.6px;background:#fff;"></div>
<div class="cell " style="left:171.0px;top:469.0px;width:55.5px;height:16.0px;line-height:17.6px;background:#fff;"></div>
<div class="cell r grn" style="left:230.0px;top:469.0px;width:51.5px;height:16.0px;line-height:17.6px;background:#fff;padding:0 .5px 0 0">9.80</div>
<div class="cell r" style="left:281.5px;top:469.0px;width:53.0px;height:16.0px;line-height:17.6px;background:#fff;padding:0 2px 0 0">-3.63</div>
<div class="cell r" style="left:334.5px;top:469.0px;width:51.0px;height:16.0px;line-height:17.6px;background:#fff;padding:0 .5px 0 0"></div>
<div class="cell r" style="left:385.5px;top:469.0px;width:52.0px;height:16.0px;line-height:17.6px;background:#fff;padding:0 .5px 0 0"></div>
<div class="cell r" style="left:437.5px;top:469.0px;width:55.0px;height:16.0px;line-height:17.6px;background:#fff;padding:0 .5px 0 0"></div>
<div class="cell r " style="left:-50.5px;top:485.0px;width:55.5px;height:16.0px;line-height:17.6px;background:#fff;padding:0 2px 0 0"></div>
<div class="cell r" style="left:5.0px;top:485.0px;width:55.0px;height:16.0px;line-height:17.6px;background:#fff;padding:0 .5px 0 0"></div>
<div class="cell " style="left:60.0px;top:485.0px;width:55.5px;height:16.0px;line-height:17.6px;background:#fff;"></div>
<div class="cell " style="left:115.5px;top:485.0px;width:55.5px;height:16.0px;line-height:17.6px;background:#fff;"></div>
<div class="cell " style="left:171.0px;top:485.0px;width:55.5px;height:16.0px;line-height:17.6px;background:#fff;"></div>
<div class="cell r grn" style="left:230.0px;top:485.0px;width:51.5px;height:16.0px;line-height:17.6px;background:#fff;padding:0 .5px 0 0">9.375</div>
<div class="cell r" style="left:281.5px;top:485.0px;width:53.0px;height:16.0px;line-height:17.6px;background:#fff;padding:0 2px 0 0">-3.45</div>
<div class="cell r" style="left:334.5px;top:485.0px;width:51.0px;height:16.0px;line-height:17.6px;background:#fff;padding:0 .5px 0 0"></div>
<div class="cell r" style="left:385.5px;top:485.0px;width:52.0px;height:16.0px;line-height:17.6px;background:#fff;padding:0 .5px 0 0"></div>
<div class="cell r" style="left:437.5px;top:485.0px;width:55.0px;height:16.0px;line-height:17.6px;background:#fff;padding:0 .5px 0 0"></div>
<div class="cell r red" style="left:-50.5px;top:501.0px;width:55.5px;height:15.0px;line-height:16.6px;background:#fff;padding:0 2px 0 0">0</div>
<div class="cell r" style="left:5.0px;top:501.0px;width:55.0px;height:15.0px;line-height:16.6px;background:#fff;padding:0 .5px 0 0">99.99</div>
<div class="cell " style="left:60.0px;top:501.0px;width:55.5px;height:15.0px;line-height:16.6px;background:#fff;"></div>
<div class="cell " style="left:115.5px;top:501.0px;width:55.5px;height:15.0px;line-height:16.6px;background:#fff;"></div>
<div class="cell " style="left:171.0px;top:501.0px;width:55.5px;height:15.0px;line-height:16.6px;background:#fff;"></div>
<div class="cell r grn" style="left:230.0px;top:501.0px;width:51.5px;height:15.0px;line-height:16.6px;background:#fff;padding:0 .5px 0 0">9.00</div>
<div class="cell r" style="left:281.5px;top:501.0px;width:53.0px;height:15.0px;line-height:16.6px;background:#fff;padding:0 2px 0 0">-3.29</div>
<div class="cell r" style="left:334.5px;top:501.0px;width:51.0px;height:15.0px;line-height:16.6px;background:#fff;padding:0 .5px 0 0"></div>
<div class="cell r" style="left:385.5px;top:501.0px;width:52.0px;height:15.0px;line-height:16.6px;background:#fff;padding:0 .5px 0 0">+2</div>
<div class="cell r" style="left:437.5px;top:501.0px;width:55.0px;height:15.0px;line-height:16.6px;background:#fff;padding:0 .5px 0 0"></div>
<div class="cell r " style="left:-50.5px;top:516.0px;width:55.5px;height:16.0px;line-height:17.6px;background:#fbf7ea;padding:0 2px 0 0"></div>
<div class="cell r" style="left:5.0px;top:516.0px;width:55.0px;height:16.0px;line-height:17.6px;background:#fbf7ea;padding:0 .5px 0 0"></div>
<div class="cell " style="left:60.0px;top:516.0px;width:55.5px;height:16.0px;line-height:17.6px;background:#fbf7ea;"></div>
<div class="cell " style="left:115.5px;top:516.0px;width:55.5px;height:16.0px;line-height:17.6px;background:#fbf7ea;"></div>
<div class="cell " style="left:171.0px;top:516.0px;width:55.5px;height:16.0px;line-height:17.6px;background:#fbf7ea;"></div>
<div class="cell r grn" style="left:230.0px;top:516.0px;width:51.5px;height:16.0px;line-height:17.6px;background:#fbf7ea;padding:0 .5px 0 0">8.65</div>
<div class="cell r" style="left:281.5px;top:516.0px;width:53.0px;height:16.0px;line-height:17.6px;background:#fbf7ea;padding:0 2px 0 0">-3.14</div>
<div class="cell r" style="left:334.5px;top:516.0px;width:51.0px;height:16.0px;line-height:17.6px;background:#fbf7ea;padding:0 .5px 0 0"></div>
<div class="cell r" style="left:385.5px;top:516.0px;width:52.0px;height:16.0px;line-height:17.6px;background:#fdeba0;padding:0"></div>
<div class="a" style="left:434px;top:516.8px;width:1px;height:11px;background:#222"></div>
<div class="cell r" style="left:437.5px;top:516.0px;width:55.0px;height:16.0px;line-height:17.6px;background:#fbf7ea;padding:0 .5px 0 0"></div>
<div class="cell r red" style="left:-50.5px;top:532.0px;width:55.5px;height:16.0px;line-height:17.6px;background:#fff;padding:0 2px 0 0">5</div>
<div class="cell r" style="left:5.0px;top:532.0px;width:55.0px;height:16.0px;line-height:17.6px;background:#fff;padding:0 .5px 0 0">-2.45</div>
<div class="cell " style="left:60.0px;top:532.0px;width:55.5px;height:16.0px;line-height:17.6px;background:#fff;"></div>
<div class="cell " style="left:115.5px;top:532.0px;width:55.5px;height:16.0px;line-height:17.6px;background:#fff;"></div>
<div class="cell " style="left:171.0px;top:532.0px;width:55.5px;height:16.0px;line-height:17.6px;background:#fff;"></div>
<div class="cell r grn" style="left:230.0px;top:532.0px;width:51.5px;height:16.0px;line-height:17.6px;background:#fff;padding:0 .5px 0 0">8.30</div>
<div class="cell r" style="left:281.5px;top:532.0px;width:53.0px;height:16.0px;line-height:17.6px;background:#fff;padding:0 2px 0 0">-2.99</div>
<div class="cell r" style="left:334.5px;top:532.0px;width:51.0px;height:16.0px;line-height:17.6px;background:#fff;padding:0 .5px 0 0"></div>
<div class="cell r" style="left:385.5px;top:532.0px;width:52.0px;height:16.0px;line-height:17.6px;background:#fff;padding:0 .5px 0 0"></div>
<div class="cell r" style="left:437.5px;top:532.0px;width:55.0px;height:16.0px;line-height:17.6px;background:#fff;padding:0 .5px 0 0"></div>
<div class="cell r " style="left:-50.5px;top:548.0px;width:55.5px;height:16.0px;line-height:17.6px;background:#fff;padding:0 2px 0 0"></div>
<div class="cell r" style="left:5.0px;top:548.0px;width:55.0px;height:16.0px;line-height:17.6px;background:#fff;padding:0 .5px 0 0"></div>
<div class="cell " style="left:60.0px;top:548.0px;width:55.5px;height:16.0px;line-height:17.6px;background:#fff;"></div>
<div class="cell " style="left:115.5px;top:548.0px;width:55.5px;height:16.0px;line-height:17.6px;background:#fff;"></div>
<div class="cell " style="left:171.0px;top:548.0px;width:55.5px;height:16.0px;line-height:17.6px;background:#fff;"></div>
<div class="cell r grn" style="left:230.0px;top:548.0px;width:51.5px;height:16.0px;line-height:17.6px;background:#fff;padding:0 .5px 0 0">7.975</div>
<div class="cell r" style="left:281.5px;top:548.0px;width:53.0px;height:16.0px;line-height:17.6px;background:#fff;padding:0 2px 0 0">-2.85</div>
<div class="cell r" style="left:334.5px;top:548.0px;width:51.0px;height:16.0px;line-height:17.6px;background:#fff;padding:0 .5px 0 0"></div>
<div class="cell r" style="left:385.5px;top:548.0px;width:52.0px;height:16.0px;line-height:17.6px;background:#fff;padding:0 .5px 0 0"></div>
<div class="cell r" style="left:437.5px;top:548.0px;width:55.0px;height:16.0px;line-height:17.6px;background:#fff;padding:0 .5px 0 0"></div>
<div class="cell r red" style="left:-50.5px;top:564.0px;width:55.5px;height:16.0px;line-height:17.6px;background:#fff;padding:0 2px 0 0">0</div>
<div class="cell r" style="left:5.0px;top:564.0px;width:55.0px;height:16.0px;line-height:17.6px;background:#fff;padding:0 .5px 0 0">99.99</div>
<div class="cell " style="left:60.0px;top:564.0px;width:55.5px;height:16.0px;line-height:17.6px;background:#fff;"></div>
<div class="cell " style="left:115.5px;top:564.0px;width:55.5px;height:16.0px;line-height:17.6px;background:#fff;"></div>
<div class="cell " style="left:171.0px;top:564.0px;width:55.5px;height:16.0px;line-height:17.6px;background:#fff;"></div>
<div class="cell r grn" style="left:230.0px;top:564.0px;width:51.5px;height:16.0px;line-height:17.6px;background:#fff;padding:0 .5px 0 0">7.675</div>
<div class="cell r" style="left:281.5px;top:564.0px;width:53.0px;height:16.0px;line-height:17.6px;background:#fff;padding:0 2px 0 0">-2.73</div>
<div class="cell r" style="left:334.5px;top:564.0px;width:51.0px;height:16.0px;line-height:17.6px;background:#fff;padding:0 .5px 0 0"></div>
<div class="cell r" style="left:385.5px;top:564.0px;width:52.0px;height:16.0px;line-height:17.6px;background:#fff;padding:0 .5px 0 0"></div>
<div class="cell r" style="left:437.5px;top:564.0px;width:55.0px;height:16.0px;line-height:17.6px;background:#fff;padding:0 .5px 0 0"></div>
<div class="cell r " style="left:-50.5px;top:580.0px;width:55.5px;height:16.0px;line-height:17.6px;background:#fff;padding:0 2px 0 0"></div>
<div class="cell r" style="left:5.0px;top:580.0px;width:55.0px;height:16.0px;line-height:17.6px;background:#fff;padding:0 .5px 0 0"></div>
<div class="cell " style="left:60.0px;top:580.0px;width:55.5px;height:16.0px;line-height:17.6px;background:#fff;"></div>
<div class="cell " style="left:115.5px;top:580.0px;width:55.5px;height:16.0px;line-height:17.6px;background:#fff;"></div>
<div class="cell " style="left:171.0px;top:580.0px;width:55.5px;height:16.0px;line-height:17.6px;background:#fff;"></div>
<div class="cell r red" style="left:230.0px;top:580.0px;width:51.5px;height:16.0px;line-height:17.6px;background:#fff;padding:0 .5px 0 0">7.40</div>
<div class="cell r" style="left:281.5px;top:580.0px;width:53.0px;height:16.0px;line-height:17.6px;background:#fff;padding:0 2px 0 0">-2.61</div>
<div class="cell r" style="left:334.5px;top:580.0px;width:51.0px;height:16.0px;line-height:17.6px;background:#fff;padding:0 .5px 0 0"></div>
<div class="cell r" style="left:385.5px;top:580.0px;width:52.0px;height:16.0px;line-height:17.6px;background:#fff;padding:0 .5px 0 0"></div>
<div class="cell r" style="left:437.5px;top:580.0px;width:55.0px;height:16.0px;line-height:17.6px;background:#fff;padding:0 .5px 0 0"></div>
<div class="a" style="left:492px;top:357px;width:14px;height:238.500px;background:#d2d8e7"></div>
<svg style="left:495px;top:362px" width="8" height="5" viewBox="0 0 8 5"><path d="M.5 4.500h7L4 .5z" fill="#6c758a"/></svg>
<svg style="left:495px;top:585px" width="8" height="5" viewBox="0 0 8 5"><path d="M.5 .5h7L4 4.500z" fill="#6c758a"/></svg>
<div class="a" style="left:494px;top:480px;width:9px;height:15px;background:#a3a9b8"></div>
<div class="inp" style="left:-2px;top:609px;width:99.500px;height:16px"></div>
<div class="t" style="left:-31px;top:611px;color:#1c263c">Combined</div>
<svg style="left:88px;top:615px" width="6" height="4" viewBox="0 0 6 4"><path d="M0 0h5.500l-2.750 3z" fill="#4a5468"/></svg>
<div class="inp" style="left:105.500px;top:609px;width:68px;height:16px"></div>
<div class="t" style="left:109px;top:611px;color:#1c263c">Auto</div>
<svg style="left:164px;top:615px" width="6" height="4" viewBox="0 0 6 4"><path d="M0 0h5.500l-2.750 3z" fill="#4a5468"/></svg>
<div class="inp" style="left:388px;top:612.500px;width:9px;height:9px;border-color:#aab2c2"></div>
<div class="t" style="left:400px;top:611px;letter-spacing:0.08px">Ignore Today's Trades</div>
<div class="a" style="left:-2px;top:628px;width:508.500px;height:50px;background:#fff;border:1px solid #c0c8d8;box-sizing:border-box"></div>
<div class="cell hd" style="left:-14.5px;top:629.7px;width:47.5px;height:17.0px;line-height:14.6px;padding:0">Cost</div>
<div class="cell r " style="left:-14.5px;top:646.7px;width:47.5px;height:16.0px;line-height:17.6px;background:#fff;padding:0 1.5px 0 0">-25.50</div>
<div class="cell r " style="left:-14.5px;top:662.7px;width:47.5px;height:16.0px;line-height:17.6px;background:#fff;padding:0 1.5px 0 0">146.10</div>
<div class="cell hd" style="left:33.0px;top:629.7px;width:47.0px;height:17.0px;line-height:14.6px;padding:0">Curr C...</div>
<div class="cell r " style="left:33.0px;top:646.7px;width:47.0px;height:16.0px;line-height:17.6px;background:#fff;padding:0 1.5px 0 0">570.00</div>
<div class="cell r " style="left:33.0px;top:662.7px;width:47.0px;height:16.0px;line-height:17.6px;background:#fff;padding:0 1.5px 0 0">395.00</div>
<div class="cell hd" style="left:80.0px;top:629.7px;width:47.0px;height:17.0px;line-height:14.6px;padding:0">Commi...</div>
<div class="cell r " style="left:80.0px;top:646.7px;width:47.0px;height:16.0px;line-height:17.6px;background:#fff;padding:0 1.5px 0 0">25.50</div>
<div class="cell r " style="left:80.0px;top:662.7px;width:47.0px;height:16.0px;line-height:17.6px;background:#fff;padding:0 1.5px 0 0">28.90</div>
<div class="cell hd" style="left:127.0px;top:629.7px;width:47.0px;height:17.0px;line-height:14.6px;padding:0">PnL</div>
<div class="cell r grn" style="left:127.0px;top:646.7px;width:47.0px;height:16.0px;line-height:17.6px;background:#fff;padding:0 1.5px 0 0">544.50</div>
<div class="cell r grn" style="left:127.0px;top:662.7px;width:47.0px;height:16.0px;line-height:17.6px;background:#fff;padding:0 1.5px 0 0">541.10</div>
<div class="cell hd" style="left:174.0px;top:629.7px;width:47.0px;height:17.0px;line-height:14.6px;padding:0">PnL%</div>
<div class="cell r grn" style="left:174.0px;top:646.7px;width:47.0px;height:16.0px;line-height:17.6px;background:#fff;padding:0 1.5px 0 0">1.17%</div>
<div class="cell r grn" style="left:174.0px;top:662.7px;width:47.0px;height:16.0px;line-height:17.6px;background:#fff;padding:0 1.5px 0 0">0.46%</div>
<div class="cell hd" style="left:221.0px;top:629.7px;width:47.0px;height:17.0px;line-height:14.6px;padding:0">Delta</div>
<div class="cell r " style="left:221.0px;top:646.7px;width:47.0px;height:16.0px;line-height:17.6px;background:#fff;padding:0 1.5px 0 0">-0.47</div>
<div class="cell r " style="left:221.0px;top:662.7px;width:47.0px;height:16.0px;line-height:17.6px;background:#fff;padding:0 1.5px 0 0">0.27</div>
<div class="cell hd" style="left:268.0px;top:629.7px;width:47.0px;height:17.0px;line-height:14.6px;padding:0">Gamma</div>
<div class="cell r " style="left:268.0px;top:646.7px;width:47.0px;height:16.0px;line-height:17.6px;background:#fff;padding:0 1.5px 0 0">-0.01</div>
<div class="cell r " style="left:268.0px;top:662.7px;width:47.0px;height:16.0px;line-height:17.6px;background:#fff;padding:0 1.5px 0 0">-0.01</div>
<div class="cell hd" style="left:315.0px;top:629.7px;width:47.0px;height:17.0px;line-height:14.6px;padding:0">Theta</div>
<div class="cell r " style="left:315.0px;top:646.7px;width:47.0px;height:16.0px;line-height:17.6px;background:#fff;padding:0 1.5px 0 0">10.73</div>
<div class="cell r " style="left:315.0px;top:662.7px;width:47.0px;height:16.0px;line-height:17.6px;background:#fff;padding:0 1.5px 0 0">15.89</div>
<div class="cell hd" style="left:362.0px;top:629.7px;width:47.0px;height:17.0px;line-height:14.6px;padding:0">Vega</div>
<div class="cell r " style="left:362.0px;top:646.7px;width:47.0px;height:16.0px;line-height:17.6px;background:#fff;padding:0 1.5px 0 0">79.78</div>
<div class="cell r " style="left:362.0px;top:662.7px;width:47.0px;height:16.0px;line-height:17.6px;background:#fff;padding:0 1.5px 0 0">48.62</div>
<div class="cell hd" style="left:409.0px;top:629.7px;width:47.0px;height:17.0px;line-height:14.6px;padding:0">T/D</div>
<div class="cell r " style="left:409.0px;top:646.7px;width:47.0px;height:16.0px;line-height:17.6px;background:#fff;padding:0 1.5px 0 0">22.8</div>
<div class="cell r " style="left:409.0px;top:662.7px;width:47.0px;height:16.0px;line-height:17.6px;background:#fff;padding:0 1.5px 0 0">58.9</div>
<div class="cell hd" style="left:456.0px;top:629.7px;width:50.5px;height:17.0px;line-height:14.6px;padding:0">Plot</div>
<div class="cell r " style="left:456.0px;top:646.7px;width:50.5px;height:16.0px;line-height:17.6px;background:#fff;padding:0 1.5px 0 0"></div>
<div class="cell r " style="left:456.0px;top:662.7px;width:50.5px;height:16.0px;line-height:17.6px;background:#fff;padding:0 1.5px 0 0"></div>
<svg style="left:476px;top:650px" width="9" height="9" viewBox="0 0 9 9"><rect x=".5" y=".5" width="8" height="8" fill="#fff" stroke="#b8bfcc"/><path d="M2 4.500l2 2 3.500-4.500" fill="none" stroke="#8a8f9a" stroke-width="1"/></svg>
<svg style="left:476px;top:666px" width="9" height="9" viewBox="0 0 9 9"><rect x=".5" y=".5" width="8" height="8" fill="#fff" stroke="#b8bfcc"/><path d="M2 4.500l2 2 3.500-4.500" fill="none" stroke="#8a8f9a" stroke-width="1"/></svg>
<div class="a" style="left:518px;top:161px;width:562px;height:514px;background:#dde3f0"></div>
<div class="a" style="left:518px;top:161px;width:562px;height:1px;background:#b7bfce"></div>
<div class="a c" style="left:518px;top:140px;width:64.5px;height:22px;box-sizing:border-box;background:#dde3f0;border:1px solid #b7bfce;border-bottom:none;border-left:1px solid #b7bfce;line-height:18px">Risk Chart</div>
<div class="a c" style="left:582.5px;top:140px;width:67.5px;height:21px;box-sizing:border-box;background:#d3d9e7;border:1px solid #b7bfce;border-bottom:1px solid #b7bfce;border-left:none;line-height:18px">Price Chart</div>
<div class="a c" style="left:650px;top:140px;width:107px;height:21px;box-sizing:border-box;background:#d3d9e7;border:1px solid #b7bfce;border-bottom:1px solid #b7bfce;border-left:none;line-height:18px">Movement Analysis</div>
<div class="a c" style="left:757px;top:140px;width:54px;height:21px;box-sizing:border-box;background:#d3d9e7;border:1px solid #b7bfce;border-bottom:1px solid #b7bfce;border-left:none;line-height:18px">Volatility</div>
<div class="a c" style="left:811px;top:140px;width:135px;height:21px;box-sizing:border-box;background:#d3d9e7;border:1px solid #b7bfce;border-bottom:1px solid #b7bfce;border-left:none;line-height:18px">Statistics &amp; Fundamentals</div>
<div class="t" style="left:523px;top:167px">Vol Adjust</div>
<div class="inp" style="left:572.500px;top:164.500px;width:45px;height:16px"></div>
<div class="t r" style="left:580px;width:20px;top:167px;color:#1c263c">0</div>
<svg style="left:607px;top:167px" width="6" height="12" viewBox="0 0 6 12"><path d="M.5 4h5L3 1zM.5 8h5L3 11z" fill="#6f788c"/></svg>
<div class="t" style="left:989.500px;top:167px;letter-spacing:-0.35px">Projection</div>
<div class="inp" style="left:1037px;top:164.500px;width:60px;height:17px"></div>
<div class="t" style="left:1039.500px;top:167px;color:#1c263c">09/07/2025</div>
<div class="a" style="left:518px;top:183.400px;width:562px;height:474.600px;background:#fff"></div>
<div class="a" style="left:518px;top:657.300px;width:562px;height:17.700px;background:#283552"></div>
<div class="t" style="left:1045px;top:661px;color:#e8eefa">280%</div>
<div class="a" style="left:1078px;top:667px;width:4px;height:1px;background:#c8d0e0"></div>
<svg style="left:0;top:0" width="1080" height="675" viewBox="0 0 1080 675" font-family="Liberation Sans, sans-serif" font-size="9" letter-spacing="-0.1">
<defs><clipPath id="pc"><rect x="565.5" y="199.4" width="514.5" height="276.9"/></clipPath></defs>
<path d="M562.5 199.4H1080 M562.5 220.7H1080 M562.5 242.0H1080 M562.5 263.3H1080 M562.5 284.6H1080 M562.5 305.9H1080 M562.5 327.2H1080 M562.5 348.5H1080 M562.5 369.8H1080 M562.5 391.1H1080 M562.5 412.4H1080 M562.5 433.7H1080 M562.5 455.0H1080 M562.5 476.3H1080 M590.5 199.4V479.30000000000007 M633.7 199.4V479.30000000000007 M676.9 199.4V479.30000000000007 M720.1 199.4V479.30000000000007 M763.3 199.4V479.30000000000007 M806.5 199.4V479.30000000000007 M849.7 199.4V479.30000000000007 M892.9 199.4V479.30000000000007 M936.1 199.4V479.30000000000007 M979.3 199.4V479.30000000000007 M1022.5 199.4V479.30000000000007 M1065.7 199.4V479.30000000000007 M565.5 199.4V476.30000000000007" stroke="#e4e5e9" stroke-width="1" fill="none"/>
<rect x="752.7" y="199.4" width="146.9" height="276.9" fill="#92cad9"/>
<rect x="788.9" y="199.4" width="74" height="276.9" fill="#4e80bc"/>
<clipPath id="bc"><rect x="752.7" y="199.4" width="146.9" height="276.9"/></clipPath>
<path d="M562.5 199.4H1080 M562.5 220.7H1080 M562.5 242.0H1080 M562.5 263.3H1080 M562.5 284.6H1080 M562.5 305.9H1080 M562.5 327.2H1080 M562.5 348.5H1080 M562.5 369.8H1080 M562.5 391.1H1080 M562.5 412.4H1080 M562.5 433.7H1080 M562.5 455.0H1080 M562.5 476.3H1080 M590.5 199.4V479.30000000000007 M633.7 199.4V479.30000000000007 M676.9 199.4V479.30000000000007 M720.1 199.4V479.30000000000007 M763.3 199.4V479.30000000000007 M806.5 199.4V479.30000000000007 M849.7 199.4V479.30000000000007 M892.9 199.4V479.30000000000007 M936.1 199.4V479.30000000000007 M979.3 199.4V479.30000000000007 M1022.5 199.4V479.30000000000007 M1065.7 199.4V479.30000000000007 M565.5 199.4V476.30000000000007" stroke="#fff" stroke-opacity=".55" stroke-width="1" fill="none" clip-path="url(#bc)"/>
<path d="M565.5 348.5H1080" stroke="#222" stroke-width="1"/>
<text transform="translate(760.8,234.4) rotate(-90)" fill="#5b93c6" font-size="9.500">6187.79</text>
<text transform="translate(797.2,234.4) rotate(-90)" fill="#86aede" font-size="9.500">6230.02</text>
<text transform="translate(860.7,234.4) rotate(-90)" fill="#86aede" font-size="9.500">6314.48</text>
<text transform="translate(897.2,234.4) rotate(-90)" fill="#5b93c6" font-size="9.500">6356.71</text>
<rect x="817.200" y="285.800" width="41" height="6.500" fill="#a08c8c" fill-opacity=".85"/>
<g clip-path="url(#pc)" fill="none">
<path d="M566.0 407.8 L569.0 404.5 L572.0 401.3 L575.0 398.0 L578.0 394.8 L581.0 391.7 L584.0 388.6 L587.0 385.5 L590.0 382.4 L593.0 379.4 L596.0 376.4 L599.0 373.5 L602.0 370.6 L605.0 367.7 L608.0 364.9 L611.0 362.2 L614.0 359.5 L617.0 356.8 L620.0 354.2 L623.0 351.6 L626.0 349.1 L629.0 346.7 L632.0 344.3 L635.0 342.0 L638.0 339.7 L641.0 337.5 L644.0 335.4 L647.0 333.3 L650.0 331.3 L653.0 329.4 L656.0 327.5 L659.0 325.7 L662.0 324.0 L665.0 322.3 L668.0 320.7 L671.0 319.1 L674.0 317.6 L677.0 316.2 L680.0 314.8 L683.0 313.5 L686.0 312.2 L689.0 311.0 L692.0 309.8 L695.0 308.7 L698.0 307.6 L701.0 306.6 L704.0 305.6 L707.0 304.6 L710.0 303.7 L713.0 302.8 L716.0 302.0 L719.0 301.2 L722.0 300.5 L725.0 299.7 L728.0 299.0 L731.0 298.4 L734.0 297.7 L737.0 297.1 L740.0 296.5 L743.0 296.0 L746.0 295.4 L749.0 294.9 L752.0 294.4 L755.0 294.0 L758.0 293.5 L761.0 293.1 L764.0 292.7 L767.0 292.3 L770.0 292.0 L773.0 291.6 L776.0 291.3 L779.0 291.0 L782.0 290.8 L785.0 290.5 L788.0 290.3 L791.0 290.1 L794.0 289.9 L797.0 289.7 L800.0 289.6 L803.0 289.5 L806.0 289.3 L809.0 289.3 L812.0 289.2 L815.0 289.1 L818.0 289.1 L821.0 289.0 L824.0 289.0 L827.0 289.0 L830.0 289.1 L833.0 289.1 L836.0 289.2 L839.0 289.2 L842.0 289.3 L845.0 289.4 L848.0 289.5 L851.0 289.6 L854.0 289.8 L857.0 289.9 L860.0 290.1 L863.0 290.3 L866.0 290.5 L869.0 290.7 L872.0 290.9 L875.0 291.1 L878.0 291.3 L881.0 291.6 L884.0 291.8 L887.0 292.1 L890.0 292.4 L893.0 292.7 L896.0 293.0 L899.0 293.3 L902.0 293.6 L905.0 293.9 L908.0 294.2 L911.0 294.6 L914.0 294.9 L917.0 295.3 L920.0 295.6 L923.0 296.0 L926.0 296.4 L929.0 296.7 L932.0 297.1 L935.0 297.5 L938.0 297.9 L941.0 298.3 L944.0 298.7 L947.0 299.1 L950.0 299.5 L953.0 299.9 L956.0 300.3 L959.0 300.7 L962.0 301.2 L965.0 301.6 L968.0 302.0 L971.0 302.4 L974.0 302.8 L977.0 303.3 L980.0 303.7 L983.0 304.1 L986.0 304.6 L989.0 305.0 L992.0 305.4 L995.0 305.8 L998.0 306.3 L1001.0 306.7 L1004.0 307.1 L1007.0 307.5 L1010.0 307.9 L1013.0 308.4 L1016.0 308.8 L1019.0 309.2 L1022.0 309.6 L1025.0 310.0 L1028.0 310.4 L1031.0 310.8 L1034.0 311.2 L1037.0 311.5 L1040.0 311.9 L1043.0 312.3 L1046.0 312.7 L1049.0 313.0 L1052.0 313.4 L1055.0 313.7 L1058.0 314.0 L1061.0 314.4 L1064.0 314.7 L1067.0 315.0 L1070.0 315.3 L1073.0 315.6 L1076.0 315.9 L1079.0 316.2 L1082.0 316.4" stroke="#7fa2f2" stroke-width="1"/>
<path d="M566.0 456.1 L569.0 451.7 L572.0 447.4 L575.0 443.2 L578.0 439.1 L581.0 435.0 L584.0 431.0 L587.0 427.1 L590.0 423.3 L593.0 419.5 L596.0 415.8 L599.0 412.2 L602.0 408.7 L605.0 405.3 L608.0 401.9 L611.0 398.6 L614.0 395.3 L617.0 392.2 L620.0 389.1 L623.0 386.0 L626.0 383.1 L629.0 380.2 L632.0 377.3 L635.0 374.5 L638.0 371.8 L641.0 369.2 L644.0 366.6 L647.0 364.0 L650.0 361.6 L653.0 359.2 L656.0 356.8 L659.0 354.5 L662.0 352.2 L665.0 350.0 L668.0 347.9 L671.0 345.8 L674.0 343.7 L677.0 341.7 L680.0 339.8 L683.0 337.9 L686.0 336.1 L689.0 334.3 L692.0 332.5 L695.0 330.8 L698.0 329.1 L701.0 327.5 L704.0 326.0 L707.0 324.4 L710.0 323.0 L713.0 321.5 L716.0 320.1 L719.0 318.8 L722.0 317.5 L725.0 316.2 L728.0 315.0 L731.0 313.8 L734.0 312.6 L737.0 311.5 L740.0 310.4 L743.0 309.4 L746.0 308.4 L749.0 307.4 L752.0 306.4 L755.0 305.5 L758.0 304.7 L761.0 303.8 L764.0 303.0 L767.0 302.2 L770.0 301.5 L773.0 300.8 L776.0 300.1 L779.0 299.4 L782.0 298.8 L785.0 298.2 L788.0 297.6 L791.0 297.0 L794.0 296.5 L797.0 296.0 L800.0 295.5 L803.0 295.1 L806.0 294.7 L809.0 294.3 L812.0 293.9 L815.0 293.5 L818.0 293.2 L821.0 292.9 L824.0 292.6 L827.0 292.3 L830.0 292.0 L833.0 291.8 L836.0 291.6 L839.0 291.4 L842.0 291.2 L845.0 291.0 L848.0 290.9 L851.0 290.8 L854.0 290.7 L857.0 290.5 L860.0 290.5 L863.0 290.4 L866.0 290.3 L869.0 290.3 L872.0 290.2 L875.0 290.2 L878.0 290.2 L881.0 290.2 L884.0 290.2 L887.0 290.2 L890.0 290.3 L893.0 290.3 L896.0 290.4 L899.0 290.4 L902.0 290.5 L905.0 290.5 L908.0 290.6 L911.0 290.7 L914.0 290.8 L917.0 290.9 L920.0 291.0 L923.0 291.2 L926.0 291.3 L929.0 291.4 L932.0 291.6 L935.0 291.7 L938.0 291.9 L941.0 292.0 L944.0 292.2 L947.0 292.4 L950.0 292.6 L953.0 292.7 L956.0 292.9 L959.0 293.1 L962.0 293.3 L965.0 293.5 L968.0 293.8 L971.0 294.0 L974.0 294.2 L977.0 294.4 L980.0 294.7 L983.0 294.9 L986.0 295.1 L989.0 295.4 L992.0 295.6 L995.0 295.9 L998.0 296.1 L1001.0 296.4 L1004.0 296.6 L1007.0 296.9 L1010.0 297.2 L1013.0 297.4 L1016.0 297.7 L1019.0 298.0 L1022.0 298.2 L1025.0 298.5 L1028.0 298.8 L1031.0 299.1 L1034.0 299.3 L1037.0 299.6 L1040.0 299.9 L1043.0 300.2 L1046.0 300.5 L1049.0 300.8 L1052.0 301.0 L1055.0 301.3 L1058.0 301.6 L1061.0 301.9 L1064.0 302.2 L1067.0 302.5 L1070.0 302.7 L1073.0 303.0 L1076.0 303.3 L1079.0 303.6 L1082.0 303.8" stroke="#5fd060" stroke-width="1"/>
<path d="M566.7 253.2 L569.7 252.1 L572.7 251.1 L575.7 250.2 L578.7 249.3 L581.7 248.4 L584.7 247.7 L587.7 247.0 L590.7 246.3 L593.7 245.7 L596.7 245.2 L599.7 244.7 L602.7 244.2 L605.7 243.8 L608.7 243.5 L611.7 243.2 L614.7 243.0 L617.7 242.8 L620.7 242.6 L623.7 242.5 L626.7 242.5 L629.7 242.4 L632.7 242.5 L635.7 242.5 L638.7 242.6 L641.7 242.8 L644.7 243.0 L647.7 243.2 L650.7 243.4 L653.7 243.7 L656.7 244.0 L659.7 244.4 L662.7 244.8 L665.7 245.2 L668.7 245.7 L671.7 246.1 L674.7 246.6 L677.7 247.2 L680.7 247.7 L683.7 248.3 L686.7 248.9 L689.7 249.5 L692.7 250.2 L695.7 250.8 L698.7 251.5 L701.7 252.2 L704.7 252.9 L707.7 253.7 L710.7 254.4 L713.7 255.2 L716.7 256.0 L719.7 256.8 L722.7 257.6 L725.7 258.4 L728.7 259.2 L731.7 260.0 L734.7 260.8 L737.7 261.7 L740.7 262.5 L743.7 263.4 L746.7 264.2 L749.7 265.1 L752.7 265.9 L755.7 266.8 L758.7 267.6 L761.7 268.5 L764.7 269.3 L767.7 270.1 L770.7 271.0 L773.7 271.8 L776.7 272.7 L779.7 273.5 L782.7 274.4 L785.7 275.2 L788.7 276.0 L791.7 276.9 L794.7 277.7 L797.7 278.5 L800.7 279.3 L803.7 280.2 L806.7 281.0 L809.7 281.8 L812.7 282.6 L815.7 283.4 L818.7 284.2 L821.7 285.1 L824.7 285.9 L827.7 286.7 L830.7 287.5 L833.7 288.3 L836.7 289.1 L839.7 289.8 L842.7 290.6 L845.7 291.4 L848.7 292.2 L851.7 293.0 L854.7 293.7 L857.7 294.5 L860.7 295.3 L863.7 296.0 L866.7 296.8 L869.7 297.5 L872.7 298.3 L875.7 299.0 L878.7 299.7 L881.7 300.5 L884.7 301.2 L887.7 301.9 L890.7 302.6 L893.7 303.3 L896.7 304.0 L899.7 304.7 L902.7 305.4 L905.7 306.1 L908.7 306.8 L911.7 307.5 L914.7 308.2 L917.7 308.8 L920.7 309.5 L923.7 310.1 L926.7 310.8 L929.7 311.4 L932.7 312.1 L935.7 312.7 L938.7 313.3 L941.7 313.9 L944.7 314.5 L947.7 315.1 L950.7 315.7 L953.7 316.3 L956.7 316.9 L959.7 317.4 L962.7 318.0 L965.7 318.6 L968.7 319.1 L971.7 319.6 L974.7 320.2 L977.7 320.7 L980.7 321.2 L983.7 321.7 L986.7 322.2 L989.7 322.7 L992.7 323.2 L995.7 323.7 L998.7 324.1 L1001.7 324.6 L1004.7 325.0 L1007.7 325.5 L1010.7 325.9 L1013.7 326.3 L1016.7 326.7 L1019.7 327.1 L1022.7 327.5 L1025.7 327.9 L1028.7 328.3 L1031.7 328.6 L1034.7 329.0 L1037.7 329.3 L1040.7 329.7 L1043.7 330.0 L1046.7 330.3 L1049.7 330.6 L1052.7 330.9 L1055.7 331.2 L1058.7 331.4 L1061.7 331.7 L1064.7 331.9 L1067.7 332.2 L1070.7 332.4 L1073.7 332.6 L1076.7 332.8 L1079.7 333.0" stroke="#f06868" stroke-width="1"/>
<path d="M566.7 290.8 L569.7 288.3 L572.7 286.0 L575.7 283.8 L578.7 281.8 L581.7 280.0 L584.7 278.3 L587.7 276.7 L590.7 275.3 L593.7 273.9 L596.7 272.7 L599.7 271.6 L602.7 270.5 L605.7 269.6 L608.7 268.7 L611.7 267.9 L614.7 267.1 L617.7 266.4 L620.7 265.8 L623.7 265.2 L626.7 264.6 L629.7 264.1 L632.7 263.6 L635.7 263.1 L638.7 262.7 L641.7 262.3 L644.7 262.0 L647.7 261.7 L650.7 261.5 L653.7 261.2 L656.7 261.1 L659.7 260.9 L662.7 260.8 L665.7 260.7 L668.7 260.7 L671.7 260.7 L674.7 260.7 L677.7 260.8 L680.7 260.9 L683.7 261.0 L686.7 261.2 L689.7 261.3 L692.7 261.5 L695.7 261.8 L698.7 262.0 L701.7 262.3 L704.7 262.6 L707.7 262.9 L710.7 263.3 L713.7 263.6 L716.7 264.0 L719.7 264.4 L722.7 264.8 L725.7 265.2 L728.7 265.7 L731.7 266.1 L734.7 266.6 L737.7 267.0 L740.7 267.5 L743.7 268.0 L746.7 268.5 L749.7 269.0 L752.7 269.5 L755.7 270.0 L758.7 270.5 L761.7 271.0 L764.7 271.5 L767.7 272.1 L770.7 272.6 L773.7 273.1 L776.7 273.6 L779.7 274.2 L782.7 274.7 L785.7 275.2 L788.7 275.7 L791.7 276.3 L794.7 276.8 L797.7 277.3 L800.7 277.9 L803.7 278.4 L806.7 279.0 L809.7 279.5 L812.7 280.0 L815.7 280.6 L818.7 281.1 L821.7 281.7 L824.7 282.2 L827.7 282.8 L830.7 283.3 L833.7 283.9 L836.7 284.4 L839.7 284.9 L842.7 285.5 L845.7 286.0 L848.7 286.6 L851.7 287.1 L854.7 287.7 L857.7 288.2 L860.7 288.7 L863.7 289.3 L866.7 289.8 L869.7 290.4 L872.7 290.9 L875.7 291.4 L878.7 292.0 L881.7 292.5 L884.7 293.0 L887.7 293.5 L890.7 294.1 L893.7 294.6 L896.7 295.1 L899.7 295.6 L902.7 296.1 L905.7 296.7 L908.7 297.2 L911.7 297.7 L914.7 298.2 L917.7 298.7 L920.7 299.2 L923.7 299.7 L926.7 300.1 L929.7 300.6 L932.7 301.1 L935.7 301.6 L938.7 302.1 L941.7 302.5 L944.7 303.0 L947.7 303.5 L950.7 303.9 L953.7 304.4 L956.7 304.8 L959.7 305.3 L962.7 305.7 L965.7 306.1 L968.7 306.6 L971.7 307.0 L974.7 307.4 L977.7 307.8 L980.7 308.2 L983.7 308.6 L986.7 309.0 L989.7 309.4 L992.7 309.8 L995.7 310.1 L998.7 310.5 L1001.7 310.9 L1004.7 311.2 L1007.7 311.6 L1010.7 311.9 L1013.7 312.2 L1016.7 312.6 L1019.7 312.9 L1022.7 313.2 L1025.7 313.5 L1028.7 313.8 L1031.7 314.1 L1034.7 314.4 L1037.7 314.7 L1040.7 314.9 L1043.7 315.2 L1046.7 315.4 L1049.7 315.7 L1052.7 315.9 L1055.7 316.1 L1058.7 316.4 L1061.7 316.6 L1064.7 316.8 L1067.7 316.9 L1070.7 317.1 L1073.7 317.3 L1076.7 317.5 L1079.7 317.6" stroke="#f06868" stroke-width="1"/>
<path d="M566.0 214.8 L569.0 217.0 L572.0 219.2 L575.0 221.3 L578.0 223.5 L581.0 225.6 L584.0 227.6 L587.0 229.7 L590.0 231.7 L593.0 233.7 L596.0 235.6 L599.0 237.6 L602.0 239.5 L605.0 241.3 L608.0 243.2 L611.0 245.0 L614.0 246.8 L617.0 248.6 L620.0 250.3 L623.0 252.1 L626.0 253.8 L629.0 255.4 L632.0 257.1 L635.0 258.7 L638.0 260.3 L641.0 261.9 L644.0 263.4 L647.0 264.9 L650.0 266.5 L653.0 267.9 L656.0 269.4 L659.0 270.8 L662.0 272.3 L665.0 273.6 L668.0 275.0 L671.0 276.4 L674.0 277.7 L677.0 279.0 L680.0 280.3 L683.0 281.6 L686.0 282.8 L689.0 284.1 L692.0 285.3 L695.0 286.5 L698.0 287.6 L701.0 288.8 L704.0 289.9 L707.0 291.1 L710.0 292.2 L713.0 293.2 L716.0 294.3 L719.0 295.4 L722.0 296.4 L725.0 297.4 L728.0 298.4 L731.0 299.4 L734.0 300.4 L737.0 301.3 L740.0 302.3 L743.0 303.2 L746.0 304.1 L749.0 305.0 L752.0 305.9 L755.0 306.8 L758.0 307.6 L761.0 308.4 L764.0 309.3 L767.0 310.1 L770.0 310.9 L773.0 311.7 L776.0 312.4 L779.0 313.2 L782.0 313.9 L785.0 314.7 L788.0 315.4 L791.0 316.1 L794.0 316.8 L797.0 317.5 L800.0 318.2 L803.0 318.8 L806.0 319.5 L809.0 320.1 L812.0 320.7 L815.0 321.3 L818.0 321.9 L821.0 322.5 L824.0 323.1 L827.0 323.7 L830.0 324.2 L833.0 324.8 L836.0 325.3 L839.0 325.8 L842.0 326.3 L845.0 326.8 L848.0 327.3 L851.0 327.8 L854.0 328.3 L857.0 328.8 L860.0 329.2 L863.0 329.7 L866.0 330.1 L869.0 330.5 L872.0 330.9 L875.0 331.3 L878.0 331.7 L881.0 332.1 L884.0 332.5 L887.0 332.9 L890.0 333.3 L893.0 333.6 L896.0 334.0 L899.0 334.3 L902.0 334.6 L905.0 335.0 L908.0 335.3 L911.0 335.6 L914.0 335.9 L917.0 336.2 L920.0 336.5 L923.0 336.8 L926.0 337.1 L929.0 337.4 L932.0 337.6 L935.0 337.9 L938.0 338.1 L941.0 338.4 L944.0 338.6 L947.0 338.9 L950.0 339.1 L953.0 339.3 L956.0 339.6 L959.0 339.8 L962.0 340.0 L965.0 340.2 L968.0 340.4 L971.0 340.6 L974.0 340.8 L977.0 341.0 L980.0 341.2 L983.0 341.3 L986.0 341.5 L989.0 341.7 L992.0 341.9 L995.0 342.0 L998.0 342.2 L1001.0 342.4 L1004.0 342.5 L1007.0 342.7 L1010.0 342.8 L1013.0 343.0 L1016.0 343.1 L1019.0 343.3 L1022.0 343.4 L1025.0 343.6 L1028.0 343.7 L1031.0 343.8 L1034.0 344.0 L1037.0 344.1 L1040.0 344.2 L1043.0 344.4 L1046.0 344.5 L1049.0 344.6 L1052.0 344.8 L1055.0 344.9 L1058.0 345.0 L1061.0 345.1 L1064.0 345.3 L1067.0 345.4 L1070.0 345.5 L1073.0 345.7 L1076.0 345.8 L1079.0 345.9 L1082.0 346.0" stroke="#3c3cc4" stroke-width="1.5"/>
<path d="M566.0 234.0 L569.0 235.9 L572.0 237.7 L575.0 239.5 L578.0 241.2 L581.0 242.9 L584.0 244.6 L587.0 246.2 L590.0 247.8 L593.0 249.4 L596.0 251.0 L599.0 252.5 L602.0 254.0 L605.0 255.4 L608.0 256.9 L611.0 258.3 L614.0 259.6 L617.0 261.0 L620.0 262.3 L623.0 263.6 L626.0 264.8 L629.0 266.1 L632.0 267.3 L635.0 268.5 L638.0 269.6 L641.0 270.8 L644.0 271.9 L647.0 273.0 L650.0 274.0 L653.0 275.1 L656.0 276.1 L659.0 277.1 L662.0 278.1 L665.0 279.0 L668.0 280.0 L671.0 280.9 L674.0 281.8 L677.0 282.7 L680.0 283.6 L683.0 284.4 L686.0 285.2 L689.0 286.1 L692.0 286.9 L695.0 287.6 L698.0 288.4 L701.0 289.2 L704.0 289.9 L707.0 290.6 L710.0 291.3 L713.0 292.0 L716.0 292.7 L719.0 293.4 L722.0 294.1 L725.0 294.7 L728.0 295.4 L731.0 296.0 L734.0 296.6 L737.0 297.3 L740.0 297.9 L743.0 298.5 L746.0 299.1 L749.0 299.6 L752.0 300.2 L755.0 300.8 L758.0 301.4 L761.0 301.9 L764.0 302.5 L767.0 303.0 L770.0 303.5 L773.0 304.1 L776.0 304.6 L779.0 305.1 L782.0 305.6 L785.0 306.1 L788.0 306.6 L791.0 307.0 L794.0 307.5 L797.0 308.0 L800.0 308.5 L803.0 308.9 L806.0 309.4 L809.0 309.8 L812.0 310.2 L815.0 310.7 L818.0 311.1 L821.0 311.5 L824.0 311.9 L827.0 312.3 L830.0 312.7 L833.0 313.1 L836.0 313.5 L839.0 313.8 L842.0 314.2 L845.0 314.6 L848.0 314.9 L851.0 315.3 L854.0 315.6 L857.0 316.0 L860.0 316.3 L863.0 316.6 L866.0 317.0 L869.0 317.3 L872.0 317.6 L875.0 317.9 L878.0 318.2 L881.0 318.5 L884.0 318.8 L887.0 319.1 L890.0 319.4 L893.0 319.6 L896.0 319.9 L899.0 320.2 L902.0 320.4 L905.0 320.7 L908.0 320.9 L911.0 321.2 L914.0 321.4 L917.0 321.7 L920.0 321.9 L923.0 322.1 L926.0 322.3 L929.0 322.6 L932.0 322.8 L935.0 323.0 L938.0 323.2 L941.0 323.4 L944.0 323.6 L947.0 323.8 L950.0 324.0 L953.0 324.1 L956.0 324.3 L959.0 324.5 L962.0 324.7 L965.0 324.8 L968.0 325.0 L971.0 325.2 L974.0 325.3 L977.0 325.5 L980.0 325.6 L983.0 325.8 L986.0 325.9 L989.0 326.1 L992.0 326.2 L995.0 326.3 L998.0 326.5 L1001.0 326.6 L1004.0 326.7 L1007.0 326.8 L1010.0 327.0 L1013.0 327.1 L1016.0 327.2 L1019.0 327.3 L1022.0 327.4 L1025.0 327.5 L1028.0 327.6 L1031.0 327.7 L1034.0 327.8 L1037.0 327.9 L1040.0 328.0 L1043.0 328.1 L1046.0 328.2 L1049.0 328.3 L1052.0 328.3 L1055.0 328.4 L1058.0 328.5 L1061.0 328.6 L1064.0 328.7 L1067.0 328.7 L1070.0 328.8 L1073.0 328.9 L1076.0 328.9 L1079.0 329.0 L1082.0 329.1" stroke="#0a8a10" stroke-width="1.5"/>
</g>
<circle cx="858.300" cy="290.300" r="3" fill="#52c8c4" stroke="#1c3c4c" stroke-width="1"/>
<path d="M565.5 423.300H1080M702.900 199.4V476.30000000000007" stroke="#b0b0b0" stroke-width="1" stroke-dasharray="2 1.500" fill="none"/>
<text x="560" y="202.6" text-anchor="end" fill="#333">3%</text>
<text x="560" y="223.9" text-anchor="end" fill="#333">3%</text>
<text x="560" y="245.2" text-anchor="end" fill="#333">2%</text>
<text x="560" y="266.5" text-anchor="end" fill="#333">2%</text>
<text x="560" y="287.8" text-anchor="end" fill="#333">1%</text>
<text x="560" y="309.1" text-anchor="end" fill="#333">1%</text>
<text x="560" y="330.4" text-anchor="end" fill="#333">0%</text>
<text x="560" y="351.7" text-anchor="end" fill="#333">0%</text>
<text x="560" y="373.0" text-anchor="end" fill="#333">0%</text>
<text x="560" y="394.3" text-anchor="end" fill="#333">-1%</text>
<text x="560" y="415.6" text-anchor="end" fill="#333">-1%</text>
<text x="560" y="436.9" text-anchor="end" fill="#333">-2%</text>
<text x="560" y="458.2" text-anchor="end" fill="#333">-2%</text>
<text x="560" y="479.5" text-anchor="end" fill="#333">-3%</text>
<rect x="524" y="284" width="38" height="11" fill="#0a8a10"/><text x="560" y="293.500" text-anchor="end" fill="#fff">1%</text>
<rect x="524.500" y="417.500" width="37" height="12" fill="#fff" stroke="#6a7890"/><text x="560" y="427" text-anchor="end" fill="#222">-2%</text>
<text x="590.5" y="195" text-anchor="middle" fill="#222">-4.3%</text>
<text x="633.7" y="195" text-anchor="middle" fill="#222">-3.5%</text>
<text x="676.9" y="195" text-anchor="middle" fill="#222">-2.7%</text>
<text x="720.1" y="195" text-anchor="middle" fill="#222">-1.9%</text>
<text x="763.3" y="195" text-anchor="middle" fill="#222">-1.2%</text>
<text x="806.5" y="195" text-anchor="middle" fill="#222">-0.4%</text>
<text x="849.7" y="195" text-anchor="middle" fill="#222">0.4%</text>
<text x="892.9" y="195" text-anchor="middle" fill="#222">1.2%</text>
<text x="936.1" y="195" text-anchor="middle" fill="#222">2.0%</text>
<text x="979.3" y="195" text-anchor="middle" fill="#222">2.8%</text>
<text x="1022.5" y="195" text-anchor="middle" fill="#222">3.6%</text>
<text x="1065.7" y="195" text-anchor="middle" fill="#222">4.4%</text>
<rect x="689.500" y="184.500" width="27" height="10" fill="#fff" stroke="#6a7890"/><text x="703" y="193.500" text-anchor="middle" fill="#222">-2.3%</text>
<rect x="846" y="184.500" width="25" height="10" fill="#fff" stroke="#6a7890"/><text x="858.500" y="193.500" text-anchor="middle" fill="#222">0.6%</text>
<text x="590.5" y="489" text-anchor="middle" fill="#222">6000</text>
<text x="633.7" y="489" text-anchor="middle" fill="#222">6050</text>
<text x="676.9" y="489" text-anchor="middle" fill="#222">6100</text>
<text x="720.1" y="489" text-anchor="middle" fill="#222">6150</text>
<text x="763.3" y="489" text-anchor="middle" fill="#222">6200</text>
<text x="806.5" y="489" text-anchor="middle" fill="#222">6250</text>
<text x="849.7" y="489" text-anchor="middle" fill="#222">6300</text>
<text x="892.9" y="489" text-anchor="middle" fill="#222">6350</text>
<text x="936.1" y="489" text-anchor="middle" fill="#222">6400</text>
<text x="979.3" y="489" text-anchor="middle" fill="#222">6450</text>
<text x="1022.5" y="489" text-anchor="middle" fill="#222">6500</text>
<text x="1065.7" y="489" text-anchor="middle" fill="#222">6550</text>
<rect x="570.500" y="204" width="139.500" height="105.500" rx="3.500" fill="#e6ebf4" fill-opacity=".86" stroke="#a9b1c0"/>
<rect x="577.300" y="210.5" width="2.400" height="10.700" fill="#a4e08c"/>
<text x="580" y="219.6" fill="#555" font-size="9.100">2,230.75 Realized PnL</text>
<rect x="577.300" y="222.2" width="2.400" height="10.700" fill="#58c048"/>
<text x="580" y="231.3" font-size="9.100"><tspan fill="#444">-2</tspan><tspan fill="#f06060" dx="3.2">29ago. 5350 Put Δ</tspan></text>
<text x="700.5" y="231.3" font-size="9.100" text-anchor="end" fill="#f06060">-4.02</text>
<rect x="577.300" y="233.9" width="2.400" height="10.700" fill="#58c048"/>
<text x="580" y="243.0" font-size="9.100"><tspan fill="#444">+2</tspan><tspan fill="#5050e0" dx="3.2">29ago. 5250 Put Δ</tspan></text>
<text x="703.3" y="243.0" font-size="9.100" text-anchor="end" fill="#5050e0">-3.29</text>
<rect x="577.300" y="245.6" width="2.400" height="10.700" fill="#88aae8"/>
<text x="580" y="254.7" font-size="9.100"><tspan fill="#444">+2</tspan><tspan fill="#5050e0" dx="3.2">31jul. 5450 Put Δ</tspan></text>
<text x="696" y="254.7" font-size="9.100" text-anchor="end" fill="#5050e0">-1.56</text>
<rect x="577.300" y="257.3" width="2.400" height="10.700" fill="#88aae8"/>
<text x="580" y="266.4" font-size="9.100"><tspan fill="#444">+2</tspan><tspan fill="#5050e0" dx="3.2">31jul. 5700 Put Δ</tspan></text>
<text x="696" y="266.4" font-size="9.100" text-anchor="end" fill="#5050e0">-3.17</text>
<rect x="577.300" y="269.0" width="2.400" height="10.700" fill="#88aae8"/>
<text x="580" y="278.1" font-size="9.100"><tspan fill="#444">-7</tspan><tspan fill="#f06060" dx="3.2">31jul. 5650 Put Δ</tspan></text>
<text x="693" y="278.1" font-size="9.100" text-anchor="end" fill="#f06060">-2.71</text>
<rect x="577.300" y="280.7" width="2.400" height="10.700" fill="#88aae8"/>
<text x="580" y="289.8" font-size="9.100"><tspan fill="#444">+1</tspan><tspan fill="#5050e0" dx="3.2">31jul. 5600 Put Δ</tspan></text>
<text x="696" y="289.8" font-size="9.100" text-anchor="end" fill="#5050e0">-2.35</text>
<rect x="577.300" y="292.4" width="2.400" height="10.700" fill="#88aae8"/>
<text x="580" y="301.5" font-size="9.100"><tspan fill="#444">+2</tspan><tspan fill="#5050e0" dx="3.2">29ago. 5350 Put Δ</tspan></text>
<text x="703.3" y="301.5" font-size="9.100" text-anchor="end" fill="#5050e0">-4.02</text>
<rect x="570.500" y="425.500" width="160" height="46.500" rx="3.500" fill="#e8eef8" fill-opacity=".93" stroke="#8f9bb0"/>
<text x="577.300" y="440.3" fill="#1a8a2a" font-size="9.100">31/07/2025 (0)</text><text x="724" y="440.3" fill="#1a8a2a" font-size="9.100" text-anchor="end">559.22</text>
<text x="577.300" y="451.9" fill="#f05858" font-size="9.100">20/07/2025 (11) T+11</text><text x="724" y="451.9" fill="#f05858" font-size="9.100" text-anchor="end">800.47</text>
<text x="577.300" y="463.6" fill="#48c050" font-size="9.100">09/07/2025 (22) T+0</text><text x="724" y="463.6" fill="#48c050" font-size="9.100" text-anchor="end">198.88</text>
<rect x="521.500" y="495" width="570" height="159.500" rx="3" fill="#e9eff8" stroke="#9aa5b8"/>
<text x="543.500" y="521.5" text-anchor="middle" fill="#555" font-size="8.900">PnL</text>
<text x="543.500" y="558.5" text-anchor="middle" fill="#555" font-size="8.900">Delta</text>
<text x="543.500" y="586.2" text-anchor="middle" fill="#555" font-size="8.900">Gamma</text>
<text x="543.500" y="613.5" text-anchor="middle" fill="#555" font-size="8.900">Theta</text>
<text x="543.500" y="641.4" text-anchor="middle" fill="#555" font-size="8.900">Vega</text>
<rect x="566.8" y="518.3" width="46.4" height="10.0" fill="#f07078" stroke="#4a4a58" stroke-width=".7"/>
<rect x="613.2" y="518.3" width="43.3" height="4.0" fill="#f07078" stroke="#4a4a58" stroke-width=".7"/>
<rect x="656.5" y="517.4" width="43.3" height="0.9" fill="#5575f5" stroke="#4a4a58" stroke-width=".7"/>
<rect x="699.8" y="515.3" width="43.3" height="3.0" fill="#5575f5" stroke="#4a4a58" stroke-width=".7"/>
<rect x="743.0" y="514.0" width="43.3" height="4.3" fill="#5575f5" stroke="#4a4a58" stroke-width=".7"/>
<rect x="786.3" y="512.2" width="43.3" height="6.1" fill="#5575f5" stroke="#4a4a58" stroke-width=".7"/>
<rect x="829.6" y="511.6" width="43.3" height="6.7" fill="#5575f5" stroke="#4a4a58" stroke-width=".7"/>
<rect x="872.9" y="511.6" width="43.3" height="6.7" fill="#5575f5" stroke="#4a4a58" stroke-width=".7"/>
<rect x="916.2" y="511.6" width="43.3" height="6.7" fill="#5575f5" stroke="#4a4a58" stroke-width=".7"/>
<rect x="959.4" y="513.1" width="43.3" height="5.2" fill="#5575f5" stroke="#4a4a58" stroke-width=".7"/>
<rect x="1002.7" y="513.6" width="43.3" height="4.7" fill="#5575f5" stroke="#4a4a58" stroke-width=".7"/>
<rect x="1046.0" y="514.0" width="36.0" height="4.3" fill="#5575f5" stroke="#4a4a58" stroke-width=".7"/>
<text x="591.2" y="507.2" text-anchor="middle" fill="#f06464" font-size="8.900">-2%</text>
<text x="591.2" y="517.9" text-anchor="middle" fill="#f06464" font-size="8.900">-707</text>
<text x="634.4" y="507.2" text-anchor="middle" fill="#f06464" font-size="8.900">-1%</text>
<text x="634.4" y="517.9" text-anchor="middle" fill="#f06464" font-size="8.900">-262</text>
<text x="677.6" y="526.9" text-anchor="middle" fill="#6a6aec" font-size="8.900">59</text>
<text x="677.6" y="535.2" text-anchor="middle" fill="#6a6aec" font-size="8.900">0%</text>
<text x="720.8" y="526.9" text-anchor="middle" fill="#6a6aec" font-size="8.900">259</text>
<text x="720.8" y="535.2" text-anchor="middle" fill="#6a6aec" font-size="8.900">1%</text>
<text x="764.0" y="526.9" text-anchor="middle" fill="#6a6aec" font-size="8.900">420</text>
<text x="764.0" y="535.2" text-anchor="middle" fill="#6a6aec" font-size="8.900">1%</text>
<text x="807.2" y="526.9" text-anchor="middle" fill="#6a6aec" font-size="8.900">501</text>
<text x="807.2" y="535.2" text-anchor="middle" fill="#6a6aec" font-size="8.900">1%</text>
<text x="850.4" y="526.9" text-anchor="middle" fill="#6a6aec" font-size="8.900">538</text>
<text x="850.4" y="535.2" text-anchor="middle" fill="#6a6aec" font-size="8.900">1%</text>
<text x="893.6" y="526.9" text-anchor="middle" fill="#6a6aec" font-size="8.900">544</text>
<text x="893.6" y="535.2" text-anchor="middle" fill="#6a6aec" font-size="8.900">1%</text>
<text x="936.8" y="526.9" text-anchor="middle" fill="#6a6aec" font-size="8.900">529</text>
<text x="936.8" y="535.2" text-anchor="middle" fill="#6a6aec" font-size="8.900">1%</text>
<text x="980.0" y="526.9" text-anchor="middle" fill="#6a6aec" font-size="8.900">501</text>
<text x="980.0" y="535.2" text-anchor="middle" fill="#6a6aec" font-size="8.900">1%</text>
<text x="1023.2" y="526.9" text-anchor="middle" fill="#6a6aec" font-size="8.900">466</text>
<text x="1023.2" y="535.2" text-anchor="middle" fill="#6a6aec" font-size="8.900">1%</text>
<text x="1066.4" y="526.9" text-anchor="middle" fill="#6a6aec" font-size="8.900">429</text>
<text x="1066.4" y="535.2" text-anchor="middle" fill="#6a6aec" font-size="8.900">1%</text>
<rect x="566.8" y="545.9" width="46.4" height="9.1" fill="#5575f5" stroke="#4a4a58" stroke-width=".7"/>
<rect x="613.2" y="549.0" width="43.3" height="6.0" fill="#5575f5" stroke="#4a4a58" stroke-width=".7"/>
<rect x="656.5" y="550.5" width="43.3" height="4.5" fill="#5575f5" stroke="#4a4a58" stroke-width=".7"/>
<rect x="699.8" y="552.0" width="43.3" height="3.0" fill="#5575f5" stroke="#4a4a58" stroke-width=".7"/>
<rect x="743.0" y="553.2" width="43.3" height="1.8" fill="#5575f5" stroke="#4a4a58" stroke-width=".7"/>
<rect x="786.3" y="554.1" width="43.3" height="0.9" fill="#5575f5" stroke="#4a4a58" stroke-width=".7"/>
<path d="M829.6 555H872.9" stroke="#555" stroke-width="1"/>
<path d="M872.9 555H916.2" stroke="#555" stroke-width="1"/>
<path d="M916.2 555H959.4" stroke="#555" stroke-width="1"/>
<path d="M959.4 555H1002.7" stroke="#555" stroke-width="1"/>
<path d="M1002.7 555H1046.0" stroke="#555" stroke-width="1"/>
<path d="M1046.0 555H1082.0" stroke="#555" stroke-width="1"/>
<text x="591.2" y="563.4" text-anchor="middle" fill="#6a6aec" font-size="8.900">10.32</text>
<text x="634.4" y="563.4" text-anchor="middle" fill="#6a6aec" font-size="8.900">7.57</text>
<text x="677.6" y="563.4" text-anchor="middle" fill="#6a6aec" font-size="8.900">5.38</text>
<text x="720.8" y="563.4" text-anchor="middle" fill="#6a6aec" font-size="8.900">3.64</text>
<text x="764.0" y="563.4" text-anchor="middle" fill="#6a6aec" font-size="8.900">2.16</text>
<text x="807.2" y="563.4" text-anchor="middle" fill="#6a6aec" font-size="8.900">1.13</text>
<text x="850.4" y="563.4" text-anchor="middle" fill="#6a6aec" font-size="8.900">0.39</text>
<text x="893.6" y="554.3" text-anchor="middle" fill="#f06464" font-size="8.900">-0.12</text>
<text x="936.8" y="554.3" text-anchor="middle" fill="#f06464" font-size="8.900">-0.45</text>
<text x="980.0" y="554.3" text-anchor="middle" fill="#f06464" font-size="8.900">-0.64</text>
<text x="1023.2" y="554.3" text-anchor="middle" fill="#f06464" font-size="8.900">-0.73</text>
<text x="1066.4" y="554.3" text-anchor="middle" fill="#f06464" font-size="8.900">-0.76</text>
<rect x="566.8" y="583.0" width="46.4" height="8.5" fill="#f07078" stroke="#4a4a58" stroke-width=".7"/>
<rect x="613.2" y="583.0" width="43.3" height="7.0" fill="#f07078" stroke="#4a4a58" stroke-width=".7"/>
<rect x="656.5" y="583.0" width="43.3" height="5.0" fill="#f07078" stroke="#4a4a58" stroke-width=".7"/>
<rect x="699.8" y="583.0" width="43.3" height="4.0" fill="#f07078" stroke="#4a4a58" stroke-width=".7"/>
<rect x="743.0" y="583.0" width="43.3" height="3.0" fill="#f07078" stroke="#4a4a58" stroke-width=".7"/>
<rect x="786.3" y="583.0" width="43.3" height="2.4" fill="#f07078" stroke="#4a4a58" stroke-width=".7"/>
<rect x="829.6" y="583.0" width="43.3" height="1.6" fill="#f07078" stroke="#4a4a58" stroke-width=".7"/>
<rect x="872.9" y="583.0" width="43.3" height="1.2" fill="#f07078" stroke="#4a4a58" stroke-width=".7"/>
<rect x="916.2" y="583.0" width="43.3" height="1.0" fill="#f07078" stroke="#4a4a58" stroke-width=".7"/>
<path d="M959.4 583H1002.7" stroke="#555" stroke-width="1"/>
<path d="M1002.7 583H1046.0" stroke="#555" stroke-width="1"/>
<path d="M1046.0 583H1082.0" stroke="#555" stroke-width="1"/>
<text x="591.2" y="581.6" text-anchor="middle" fill="#f06464" font-size="8.900">-0.06</text>
<text x="634.4" y="581.6" text-anchor="middle" fill="#f06464" font-size="8.900">-0.05</text>
<text x="677.6" y="581.6" text-anchor="middle" fill="#f06464" font-size="8.900">-0.04</text>
<text x="720.8" y="581.6" text-anchor="middle" fill="#f06464" font-size="8.900">-0.03</text>
<text x="764.0" y="581.6" text-anchor="middle" fill="#f06464" font-size="8.900">-0.02</text>
<text x="807.2" y="581.6" text-anchor="middle" fill="#f06464" font-size="8.900">-0.02</text>
<text x="850.4" y="581.6" text-anchor="middle" fill="#f06464" font-size="8.900">-0.01</text>
<text x="893.6" y="581.6" text-anchor="middle" fill="#f06464" font-size="8.900">-0.01</text>
<text x="936.8" y="581.6" text-anchor="middle" fill="#f06464" font-size="8.900">-0.01</text>
<text x="980.0" y="591.2" text-anchor="middle" fill="#6a6aec" font-size="8.900">0.00</text>
<text x="1023.2" y="591.2" text-anchor="middle" fill="#6a6aec" font-size="8.900">0.00</text>
<text x="1066.4" y="591.2" text-anchor="middle" fill="#6a6aec" font-size="8.900">0.00</text>
<rect x="566.8" y="601.2" width="46.4" height="9.1" fill="#5575f5" stroke="#4a4a58" stroke-width=".7"/>
<rect x="613.2" y="602.7" width="43.3" height="7.6" fill="#5575f5" stroke="#4a4a58" stroke-width=".7"/>
<rect x="656.5" y="604.2" width="43.3" height="6.1" fill="#5575f5" stroke="#4a4a58" stroke-width=".7"/>
<rect x="699.8" y="605.6" width="43.3" height="4.7" fill="#5575f5" stroke="#4a4a58" stroke-width=".7"/>
<rect x="743.0" y="606.8" width="43.3" height="3.5" fill="#5575f5" stroke="#4a4a58" stroke-width=".7"/>
<rect x="786.3" y="607.9" width="43.3" height="2.4" fill="#5575f5" stroke="#4a4a58" stroke-width=".7"/>
<rect x="829.6" y="608.9" width="43.3" height="1.4" fill="#5575f5" stroke="#4a4a58" stroke-width=".7"/>
<rect x="872.9" y="609.6" width="43.3" height="0.7" fill="#5575f5" stroke="#4a4a58" stroke-width=".7"/>
<path d="M916.2 610.3H959.4" stroke="#555" stroke-width="1"/>
<path d="M959.4 610.3H1002.7" stroke="#555" stroke-width="1"/>
<path d="M1002.7 610.3H1046.0" stroke="#555" stroke-width="1"/>
<path d="M1046.0 610.3H1082.0" stroke="#555" stroke-width="1"/>
<text x="591.2" y="618.7" text-anchor="middle" fill="#6a6aec" font-size="8.900">113.31</text>
<text x="634.4" y="618.7" text-anchor="middle" fill="#6a6aec" font-size="8.900">94.89</text>
<text x="677.6" y="618.7" text-anchor="middle" fill="#6a6aec" font-size="8.900">76.38</text>
<text x="720.8" y="618.7" text-anchor="middle" fill="#6a6aec" font-size="8.900">58.86</text>
<text x="764.0" y="618.7" text-anchor="middle" fill="#6a6aec" font-size="8.900">43.01</text>
<text x="807.2" y="618.7" text-anchor="middle" fill="#6a6aec" font-size="8.900">29.29</text>
<text x="850.4" y="618.7" text-anchor="middle" fill="#6a6aec" font-size="8.900">17.89</text>
<text x="893.6" y="618.7" text-anchor="middle" fill="#6a6aec" font-size="8.900">8.80</text>
<text x="936.8" y="618.7" text-anchor="middle" fill="#6a6aec" font-size="8.900">1.86</text>
<text x="980.0" y="609.5" text-anchor="middle" fill="#f06464" font-size="8.900">-3.17</text>
<text x="1023.2" y="609.5" text-anchor="middle" fill="#f06464" font-size="8.900">-6.59</text>
<text x="1066.4" y="609.5" text-anchor="middle" fill="#f06464" font-size="8.900">-8.69</text>
<rect x="566.8" y="638.0" width="46.4" height="8.7" fill="#f07078" stroke="#4a4a58" stroke-width=".7"/>
<rect x="613.2" y="638.0" width="43.3" height="5.7" fill="#f07078" stroke="#4a4a58" stroke-width=".7"/>
<rect x="656.5" y="638.0" width="43.3" height="2.8" fill="#f07078" stroke="#4a4a58" stroke-width=".7"/>
<path d="M699.8 638H743.0" stroke="#555" stroke-width="1"/>
<rect x="743.0" y="635.8" width="43.3" height="2.2" fill="#5575f5" stroke="#4a4a58" stroke-width=".7"/>
<rect x="786.3" y="633.9" width="43.3" height="4.1" fill="#5575f5" stroke="#4a4a58" stroke-width=".7"/>
<rect x="829.6" y="632.2" width="43.3" height="5.8" fill="#5575f5" stroke="#4a4a58" stroke-width=".7"/>
<rect x="872.9" y="631.5" width="43.3" height="6.5" fill="#5575f5" stroke="#4a4a58" stroke-width=".7"/>
<rect x="916.2" y="631.0" width="43.3" height="7.0" fill="#5575f5" stroke="#4a4a58" stroke-width=".7"/>
<rect x="959.4" y="630.7" width="43.3" height="7.3" fill="#5575f5" stroke="#4a4a58" stroke-width=".7"/>
<rect x="1002.7" y="630.8" width="43.3" height="7.2" fill="#5575f5" stroke="#4a4a58" stroke-width=".7"/>
<rect x="1046.0" y="631.1" width="36.0" height="6.9" fill="#5575f5" stroke="#4a4a58" stroke-width=".7"/>
<text x="591.2" y="636.9" text-anchor="middle" fill="#f06464" font-size="8.900">-73.12</text>
<text x="634.4" y="636.9" text-anchor="middle" fill="#f06464" font-size="8.900">-48.24</text>
<text x="677.6" y="636.9" text-anchor="middle" fill="#f06464" font-size="8.900">-23.08</text>
<text x="720.8" y="636.9" text-anchor="middle" fill="#f06464" font-size="8.900">-1.83</text>
<text x="764.0" y="646.2" text-anchor="middle" fill="#6a6aec" font-size="8.900">18.82</text>
<text x="807.2" y="646.2" text-anchor="middle" fill="#6a6aec" font-size="8.900">34.73</text>
<text x="850.4" y="646.2" text-anchor="middle" fill="#6a6aec" font-size="8.900">48.70</text>
<text x="893.6" y="646.2" text-anchor="middle" fill="#6a6aec" font-size="8.900">54.85</text>
<text x="936.8" y="646.2" text-anchor="middle" fill="#6a6aec" font-size="8.900">59.55</text>
<text x="980.0" y="646.2" text-anchor="middle" fill="#6a6aec" font-size="8.900">61.31</text>
<text x="1023.2" y="646.2" text-anchor="middle" fill="#6a6aec" font-size="8.900">60.70</text>
<text x="1066.4" y="646.2" text-anchor="middle" fill="#6a6aec" font-size="8.900">58.30</text>
<rect x="681.5" y="480.500" width="42.0" height="172.500" rx="1" fill="#e9eff8" fill-opacity=".95" stroke="#7f8ca4"/>
<text x="702.5" y="488.900" text-anchor="middle" fill="#222" font-size="8.900">6129.46</text>
<text x="702.5" y="517.9" text-anchor="middle" fill="#2828e0" font-size="8.900">199</text>
<text x="702.5" y="530.9" text-anchor="middle" fill="#2828e0" font-size="8.900">0%</text>
<text x="702.5" y="558.5" text-anchor="middle" fill="#2828e0" font-size="8.900">4.22</text>
<text x="702.5" y="586.2" text-anchor="middle" fill="#e82828" font-size="8.900">-0.03</text>
<text x="702.5" y="613.5" text-anchor="middle" fill="#2828e0" font-size="8.900">65.89</text>
<text x="702.5" y="641.4" text-anchor="middle" fill="#e82828" font-size="8.900">-9.84</text>
<rect x="837" y="480.500" width="42.5" height="172.500" rx="3.5" fill="#e9eff8" fill-opacity=".95" stroke="#7f8ca4"/>
<text x="858.25" y="488.900" text-anchor="middle" fill="#222" font-size="8.900">6310.00</text>
<text x="858.25" y="517.9" text-anchor="middle" fill="#2828e0" font-size="8.900">541</text>
<text x="858.25" y="530.9" text-anchor="middle" fill="#2828e0" font-size="8.900">1.2%</text>
<text x="858.25" y="558.5" text-anchor="middle" fill="#2828e0" font-size="8.900">0.27</text>
<text x="858.25" y="586.2" text-anchor="middle" fill="#e82828" font-size="8.900">-0.01</text>
<text x="858.25" y="613.5" text-anchor="middle" fill="#2828e0" font-size="8.900">15.89</text>
<text x="858.25" y="641.4" text-anchor="middle" fill="#2828e0" font-size="8.900">48.62</text>
</svg>
</body></html>
